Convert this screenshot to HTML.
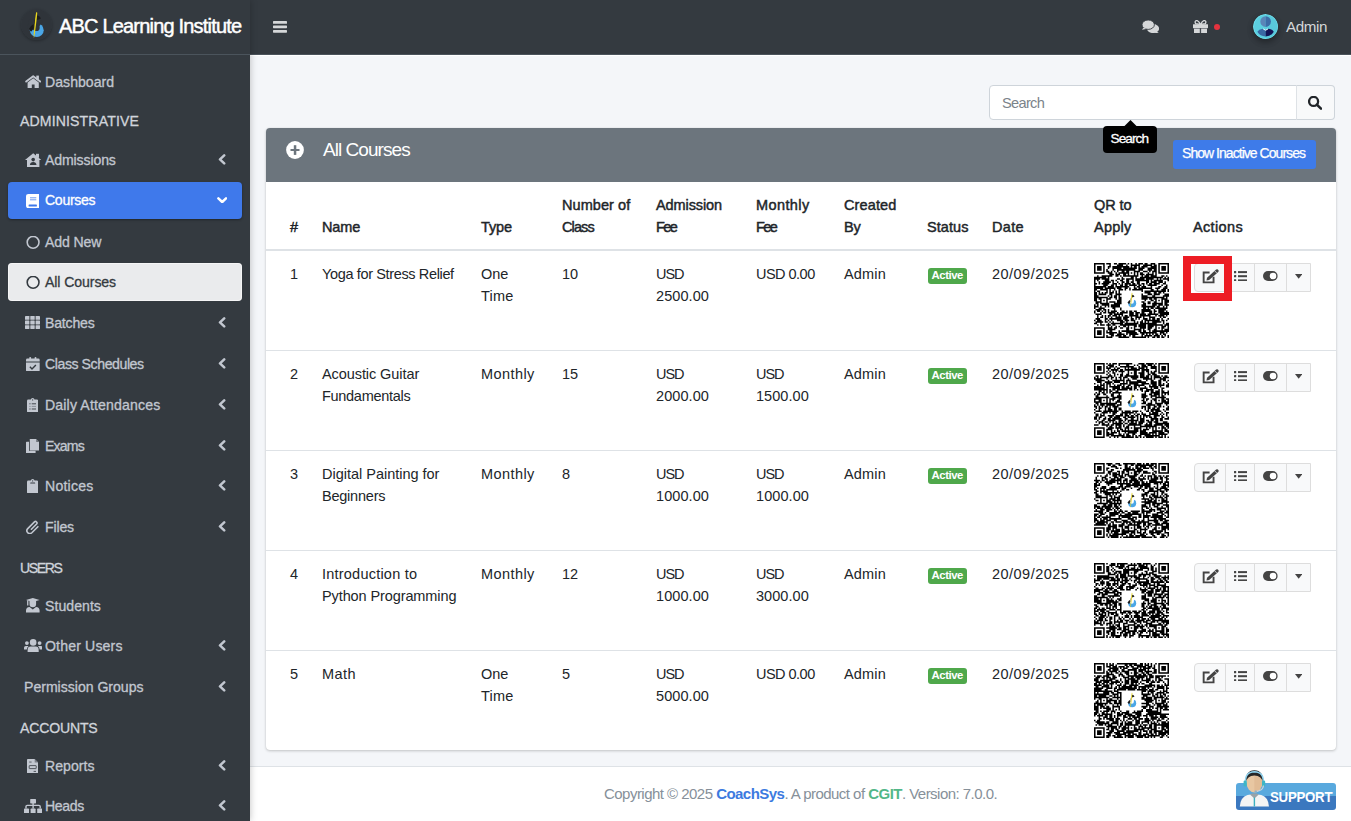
<!DOCTYPE html>
<html><head><meta charset="utf-8">
<style>
*{box-sizing:border-box;margin:0;padding:0}
html,body{width:1351px;height:821px;overflow:hidden}
body{font-family:"Liberation Sans",sans-serif;background:#f4f6f9;color:#212529;position:relative}
.a{position:absolute;white-space:nowrap}
.b{position:absolute}
</style></head>
<body>
<div class="b" style="left:250px;top:0;width:1101px;height:55px;background:#343a40"></div>
<div class="b" style="left:250px;top:55px;width:1101px;height:1px;background:#fff"></div>
<div class="b" style="left:250px;top:54px;width:1101px;height:1px;background:#4b545c"></div>
<svg class="b" style="left:273px;top:21px;" width="14" height="11.7" viewBox="0 0 14 11.7"><rect x="0" y="0" width="14" height="2.8" rx=".6" fill="#d5d7d9"/><rect x="0" y="4.4" width="14" height="2.8" rx=".6" fill="#d5d7d9"/><rect x="0" y="8.9" width="14" height="2.8" rx=".6" fill="#d5d7d9"/></svg>
<svg class="b" style="left:1142px;top:19.8px;" width="17.3" height="13.3" viewBox="0 0 17.3 13.3"><ellipse cx="11" cy="8.6" rx="6.1" ry="4.5" fill="#d5d7d9"/><path d="M14.5 11.5 L17.3 13.3 L12 12.8 Z" fill="#d5d7d9"/><ellipse cx="6.2" cy="4.7" rx="6.2" ry="4.7" fill="#d5d7d9" stroke="#343a40" stroke-width=".9"/><path d="M1.6 7.4 L0 9.8 L4.2 9 Z" fill="#d5d7d9"/></svg>
<svg class="b" style="left:1193px;top:19.8px;" width="15" height="13.3" viewBox="0 0 15 13.3"><path d="M7.5 4.3 Q5 0 3.2 0.6 Q1.4 1.3 2.6 3.6 Z" fill="none" stroke="#d5d7d9" stroke-width="1.3"/><path d="M7.5 4.3 Q10 0 11.8 0.6 Q13.6 1.3 12.4 3.6 Z" fill="none" stroke="#d5d7d9" stroke-width="1.3"/><rect x="0" y="4.2" width="15" height="4" rx=".4" fill="#d5d7d9"/><rect x="1" y="8.7" width="13" height="4.6" fill="#d5d7d9"/><rect x="6.8" y="8.2" width="1.3" height="5.2" fill="#343a40" opacity=".9"/></svg>
<div class="b" style="left:1213.7px;top:24.2px;width:6.2px;height:6.2px;border-radius:50%;background:#e4323e"></div>
<svg class="b" style="left:1252.8px;top:13.8px;border-radius:50%;box-shadow:0 3px 6px rgba(0,0,0,.16),0 3px 6px rgba(0,0,0,.23)" width="25.4" height="25.4" viewBox="0 0 25.4 25.4"><defs><clipPath id="av"><circle cx="12.7" cy="12.7" r="11.6"/></clipPath></defs><circle cx="12.7" cy="12.7" r="12.7" fill="#6fdfee"/><circle cx="12.7" cy="12.7" r="11.6" fill="#5ccfe0"/><g clip-path="url(#av)"><path d="M12.7 0 L25.4 0 L25.4 25.4 L12.7 25.4 Z" fill="#55c3d6" opacity=".5"/></g><path d="M12.6 2.3 A5.3 5.3 0 0 0 12.6 12.9 Z" fill="#5b85b8"/><path d="M12.6 2.3 A5.3 5.3 0 0 1 12.6 12.9 Z" fill="#3d6ca7"/><path d="M12.6 16.2 L9.6 14.8 Q5.8 15.2 4.4 17.8 Q7 22.4 12.6 22.4 Z" fill="#3a68a4"/><path d="M12.6 16.2 L15.6 14.8 Q19.4 15.2 20.8 17.8 Q18.2 22.4 12.6 22.4 Z" fill="#141456"/><path d="M10.2 14.9 L12.6 16.3 L15 14.9" stroke="#fff" stroke-width=".9" fill="none"/></svg>
<div class="a" style="left:1286px;top:15.93px;font-size:15.2px;letter-spacing:-0.4px;line-height:22px;color:#d5d7d9;">Admin</div>
<div class="b" style="left:989px;top:85px;width:308px;height:34.5px;background:#fff;border:1px solid #ced4da;border-radius:4px 0 0 4px"></div>
<div class="a" style="left:1002px;top:92.24px;font-size:14.6px;letter-spacing:-0.69px;line-height:22px;color:#7b838a;">Search</div>
<div class="b" style="left:1296px;top:85px;width:39px;height:34.5px;background:#f8f9fa;border:1px solid #ced4da;border-left:1px solid #dee2e6;border-radius:0 4px 4px 0"></div>
<svg class="b" style="left:1308px;top:96.2px;" width="14" height="13.5" viewBox="0 0 14 13.5"><circle cx="5.6" cy="5.4" r="4.5" stroke="#212529" stroke-width="2.3" fill="none"/><path d="M8.8 8.6 L13 12.6" stroke="#212529" stroke-width="2.6" stroke-linecap="round"/></svg>
<div class="b" style="left:266px;top:128px;width:1070px;height:622px;background:#fff;border-radius:4px;box-shadow:0 0 1px rgba(0,0,0,.125),0 1px 3px rgba(0,0,0,.2)"></div>
<div class="b" style="left:266px;top:128px;width:1070px;height:54px;background:#6c757d;border-radius:4px 4px 0 0"></div>
<div class="a" style="left:323px;top:139.42px;font-size:19px;letter-spacing:-0.95px;line-height:22px;color:#fff;">All Courses</div>
<svg class="b" style="left:285.5px;top:141px;" width="18" height="18" viewBox="0 0 18 18"><circle cx="9" cy="9" r="8.9" fill="#fff"/><rect x="4.5" y="8" width="9" height="2" fill="#6c757d"/><rect x="7.8" y="4.2" width="2.5" height="9.7" fill="#6c757d"/></svg>
<div class="b" style="left:1173px;top:140px;width:143px;height:29px;background:#3e7be9;border-radius:3px"></div>
<div class="a" style="left:1182px;top:141.75px;font-size:14px;letter-spacing:-0.96px;line-height:22px;color:#fff;-webkit-text-stroke:.25px #fff;">Show Inactive Courses</div>
<div class="b" style="left:1103px;top:126px;width:54px;height:26.5px;background:#000;border-radius:4px"></div>
<svg class="b" style="left:1123.5px;top:120.2px;" width="13" height="7" viewBox="0 0 13 7"><path d="M0 6.6 L6.5 0 L13 6.6Z" fill="#000"/></svg>
<div class="a" style="left:1110.5px;top:128.09px;font-size:13.6px;letter-spacing:-0.9px;line-height:22px;color:#fff;-webkit-text-stroke:.3px #fff;">Search</div>
<div class="a" style="left:290px;top:216.48px;font-size:14.5px;letter-spacing:-0.1px;line-height:22px;color:#212529;-webkit-text-stroke:.45px #212529;">#</div>
<div class="a" style="left:322px;top:216.48px;font-size:14.5px;letter-spacing:-0.1px;line-height:22px;color:#212529;-webkit-text-stroke:.45px #212529;">Name</div>
<div class="a" style="left:481px;top:216.48px;font-size:14.5px;letter-spacing:-0.1px;line-height:22px;color:#212529;-webkit-text-stroke:.45px #212529;">Type</div>
<div class="a" style="left:562px;top:194.48px;font-size:14.5px;letter-spacing:0.075px;line-height:22px;color:#212529;-webkit-text-stroke:.45px #212529;">Number of</div>
<div class="a" style="left:562px;top:216.48px;font-size:14.5px;letter-spacing:-0.9px;line-height:22px;color:#212529;-webkit-text-stroke:.45px #212529;">Class</div>
<div class="a" style="left:656px;top:194.48px;font-size:14.5px;letter-spacing:-0.1px;line-height:22px;color:#212529;-webkit-text-stroke:.45px #212529;">Admission</div>
<div class="a" style="left:656px;top:216.48px;font-size:14.5px;letter-spacing:-1.55px;line-height:22px;color:#212529;-webkit-text-stroke:.45px #212529;">Fee</div>
<div class="a" style="left:756px;top:194.48px;font-size:14.5px;letter-spacing:0.4px;line-height:22px;color:#212529;-webkit-text-stroke:.45px #212529;">Monthly</div>
<div class="a" style="left:756px;top:216.48px;font-size:14.5px;letter-spacing:-1.55px;line-height:22px;color:#212529;-webkit-text-stroke:.45px #212529;">Fee</div>
<div class="a" style="left:844px;top:194.48px;font-size:14.5px;letter-spacing:0.117px;line-height:22px;color:#212529;-webkit-text-stroke:.45px #212529;">Created</div>
<div class="a" style="left:844px;top:216.48px;font-size:14.5px;letter-spacing:-0.1px;line-height:22px;color:#212529;-webkit-text-stroke:.45px #212529;">By</div>
<div class="a" style="left:927px;top:216.48px;font-size:14.5px;letter-spacing:0.08px;line-height:22px;color:#212529;-webkit-text-stroke:.45px #212529;">Status</div>
<div class="a" style="left:992px;top:216.48px;font-size:14.5px;letter-spacing:0.333px;line-height:22px;color:#212529;-webkit-text-stroke:.45px #212529;">Date</div>
<div class="a" style="left:1094px;top:194.48px;font-size:14.5px;letter-spacing:-0.1px;line-height:22px;color:#212529;-webkit-text-stroke:.45px #212529;">QR to</div>
<div class="a" style="left:1094px;top:216.48px;font-size:14.5px;letter-spacing:0.275px;line-height:22px;color:#212529;-webkit-text-stroke:.45px #212529;">Apply</div>
<div class="a" style="left:1193px;top:216.48px;font-size:14.5px;letter-spacing:0.35px;line-height:22px;color:#212529;-webkit-text-stroke:.45px #212529;">Actions</div>
<div class="b" style="left:266px;top:249px;width:1070px;height:2px;background:#dee2e6"></div>
<div class="a" style="left:290px;top:263.18px;font-size:14.5px;letter-spacing:-0.35px;line-height:22px;color:#212529;">1</div>
<div class="a" style="left:322px;top:263.18px;font-size:14.5px;letter-spacing:-0.36px;line-height:22px;color:#212529;">Yoga for Stress Relief</div>
<div class="a" style="left:481px;top:263.18px;font-size:14.5px;letter-spacing:-0.05px;line-height:22px;color:#212529;">One</div>
<div class="a" style="left:481px;top:285.18px;font-size:14.5px;letter-spacing:0.25px;line-height:22px;color:#212529;">Time</div>
<div class="a" style="left:562px;top:263.18px;font-size:14.5px;letter-spacing:0.05px;line-height:22px;color:#212529;">10</div>
<div class="a" style="left:656px;top:263.18px;font-size:14.5px;letter-spacing:-1.05px;line-height:22px;color:#212529;">USD</div>
<div class="a" style="left:656px;top:285.18px;font-size:14.5px;letter-spacing:0.083px;line-height:22px;color:#212529;">2500.00</div>
<div class="a" style="left:756px;top:263.18px;font-size:14.5px;letter-spacing:-0.521px;line-height:22px;color:#212529;">USD 0.00</div>
<div class="a" style="left:844px;top:263.18px;font-size:14.5px;letter-spacing:0.15px;line-height:22px;color:#212529;">Admin</div>
<div class="b" style="left:928px;top:268px;width:39px;height:16px;background:#4fa84b;border-radius:3px"></div>
<div class="a" style="left:931.5px;top:264.08px;font-size:11.3px;letter-spacing:-0.4px;line-height:22px;color:#fff;font-weight:bold;">Active</div>
<div class="a" style="left:992px;top:263.18px;font-size:14.5px;letter-spacing:0.473px;line-height:22px;color:#212529;">20/09/2025</div>
<svg class="b" style="left:1094px;top:263px;" width="75" height="75" viewBox="0 0 75 75"><g transform="scale(1.530612244897959)"><path d="M0 0h7v1h-7zM8 0h3v1h-3zM13 0h2v1h-2zM16 0h5v1h-5zM22 0h1v1h-1zM24 0h1v1h-1zM27 0h1v1h-1zM29 0h3v1h-3zM33 0h2v1h-2zM37 0h3v1h-3zM42 0h7v1h-7zM0 1h1v1h-1zM6 1h1v1h-1zM10 1h1v1h-1zM15 1h4v1h-4zM21 1h1v1h-1zM24 1h6v1h-6zM32 1h6v1h-6zM39 1h2v1h-2zM42 1h1v1h-1zM48 1h1v1h-1zM0 2h1v1h-1zM2 2h3v1h-3zM6 2h1v1h-1zM9 2h2v1h-2zM12 2h11v1h-11zM24 2h1v1h-1zM26 2h2v1h-2zM29 2h1v1h-1zM31 2h4v1h-4zM37 2h4v1h-4zM42 2h1v1h-1zM44 2h3v1h-3zM48 2h1v1h-1zM0 3h1v1h-1zM2 3h3v1h-3zM6 3h1v1h-1zM9 3h1v1h-1zM12 3h6v1h-6zM19 3h9v1h-9zM29 3h4v1h-4zM35 3h6v1h-6zM42 3h1v1h-1zM44 3h3v1h-3zM48 3h1v1h-1zM0 4h1v1h-1zM2 4h3v1h-3zM6 4h1v1h-1zM8 4h1v1h-1zM12 4h1v1h-1zM15 4h12v1h-12zM29 4h3v1h-3zM35 4h3v1h-3zM39 4h2v1h-2zM42 4h1v1h-1zM44 4h3v1h-3zM48 4h1v1h-1zM0 5h1v1h-1zM6 5h1v1h-1zM8 5h2v1h-2zM11 5h1v1h-1zM13 5h1v1h-1zM15 5h1v1h-1zM18 5h2v1h-2zM21 5h2v1h-2zM26 5h4v1h-4zM32 5h3v1h-3zM36 5h1v1h-1zM38 5h3v1h-3zM42 5h1v1h-1zM48 5h1v1h-1zM0 6h7v1h-7zM9 6h3v1h-3zM14 6h1v1h-1zM16 6h7v1h-7zM24 6h1v1h-1zM26 6h1v1h-1zM28 6h1v1h-1zM30 6h2v1h-2zM35 6h1v1h-1zM38 6h1v1h-1zM40 6h1v1h-1zM42 6h7v1h-7zM10 7h3v1h-3zM14 7h3v1h-3zM19 7h2v1h-2zM22 7h1v1h-1zM26 7h1v1h-1zM28 7h1v1h-1zM30 7h3v1h-3zM34 7h5v1h-5zM40 7h1v1h-1zM2 8h1v1h-1zM5 8h7v1h-7zM14 8h2v1h-2zM17 8h1v1h-1zM19 8h10v1h-10zM31 8h1v1h-1zM33 8h3v1h-3zM37 8h4v1h-4zM44 8h2v1h-2zM47 8h1v1h-1zM0 9h8v1h-8zM9 9h1v1h-1zM18 9h1v1h-1zM24 9h2v1h-2zM27 9h1v1h-1zM30 9h15v1h-15zM46 9h1v1h-1zM48 9h1v1h-1zM0 10h4v1h-4zM5 10h5v1h-5zM15 10h2v1h-2zM18 10h2v1h-2zM21 10h5v1h-5zM27 10h6v1h-6zM34 10h5v1h-5zM41 10h1v1h-1zM43 10h1v1h-1zM45 10h4v1h-4zM0 11h1v1h-1zM2 11h1v1h-1zM7 11h3v1h-3zM11 11h2v1h-2zM14 11h1v1h-1zM17 11h2v1h-2zM21 11h2v1h-2zM25 11h1v1h-1zM27 11h9v1h-9zM37 11h1v1h-1zM39 11h6v1h-6zM48 11h1v1h-1zM0 12h1v1h-1zM3 12h1v1h-1zM6 12h5v1h-5zM12 12h1v1h-1zM15 12h1v1h-1zM18 12h2v1h-2zM21 12h2v1h-2zM24 12h2v1h-2zM28 12h2v1h-2zM34 12h2v1h-2zM37 12h4v1h-4zM42 12h3v1h-3zM46 12h1v1h-1zM0 13h2v1h-2zM3 13h1v1h-1zM5 13h5v1h-5zM12 13h3v1h-3zM16 13h1v1h-1zM18 13h1v1h-1zM20 13h4v1h-4zM25 13h2v1h-2zM28 13h2v1h-2zM31 13h2v1h-2zM34 13h1v1h-1zM36 13h2v1h-2zM39 13h4v1h-4zM45 13h2v1h-2zM0 14h1v1h-1zM6 14h3v1h-3zM11 14h2v1h-2zM14 14h1v1h-1zM17 14h2v1h-2zM20 14h2v1h-2zM23 14h5v1h-5zM29 14h2v1h-2zM32 14h1v1h-1zM35 14h6v1h-6zM44 14h1v1h-1zM47 14h1v1h-1zM0 15h8v1h-8zM9 15h4v1h-4zM14 15h9v1h-9zM26 15h1v1h-1zM28 15h2v1h-2zM31 15h3v1h-3zM37 15h1v1h-1zM42 15h2v1h-2zM46 15h2v1h-2zM0 16h6v1h-6zM7 16h7v1h-7zM15 16h3v1h-3zM20 16h2v1h-2zM23 16h1v1h-1zM26 16h2v1h-2zM29 16h9v1h-9zM40 16h3v1h-3zM45 16h3v1h-3zM0 17h2v1h-2zM4 17h5v1h-5zM10 17h1v1h-1zM13 17h1v1h-1zM16 17h3v1h-3zM20 17h1v1h-1zM23 17h1v1h-1zM25 17h7v1h-7zM37 17h2v1h-2zM41 17h1v1h-1zM44 17h3v1h-3zM48 17h1v1h-1zM0 18h1v1h-1zM2 18h2v1h-2zM8 18h1v1h-1zM10 18h1v1h-1zM12 18h1v1h-1zM14 18h1v1h-1zM16 18h1v1h-1zM31 18h1v1h-1zM33 18h14v1h-14zM48 18h1v1h-1zM0 19h2v1h-2zM3 19h1v1h-1zM5 19h1v1h-1zM7 19h2v1h-2zM10 19h3v1h-3zM14 19h1v1h-1zM16 19h1v1h-1zM33 19h4v1h-4zM39 19h2v1h-2zM42 19h2v1h-2zM45 19h1v1h-1zM0 20h2v1h-2zM3 20h5v1h-5zM10 20h2v1h-2zM14 20h4v1h-4zM31 20h1v1h-1zM35 20h3v1h-3zM39 20h4v1h-4zM46 20h3v1h-3zM0 21h3v1h-3zM9 21h1v1h-1zM11 21h1v1h-1zM13 21h2v1h-2zM16 21h1v1h-1zM31 21h4v1h-4zM38 21h2v1h-2zM45 21h4v1h-4zM0 22h9v1h-9zM10 22h2v1h-2zM13 22h2v1h-2zM16 22h2v1h-2zM31 22h15v1h-15zM47 22h1v1h-1zM0 23h2v1h-2zM3 23h2v1h-2zM8 23h3v1h-3zM14 23h1v1h-1zM16 23h2v1h-2zM31 23h4v1h-4zM36 23h2v1h-2zM39 23h2v1h-2zM44 23h4v1h-4zM0 24h2v1h-2zM4 24h1v1h-1zM6 24h1v1h-1zM8 24h1v1h-1zM15 24h3v1h-3zM33 24h1v1h-1zM37 24h2v1h-2zM40 24h1v1h-1zM42 24h1v1h-1zM44 24h1v1h-1zM46 24h3v1h-3zM1 25h4v1h-4zM8 25h1v1h-1zM10 25h4v1h-4zM15 25h3v1h-3zM31 25h2v1h-2zM35 25h2v1h-2zM39 25h2v1h-2zM44 25h1v1h-1zM46 25h3v1h-3zM1 26h2v1h-2zM4 26h6v1h-6zM13 26h5v1h-5zM32 26h2v1h-2zM35 26h2v1h-2zM38 26h7v1h-7zM46 26h2v1h-2zM0 27h1v1h-1zM2 27h1v1h-1zM5 27h5v1h-5zM11 27h6v1h-6zM31 27h3v1h-3zM38 27h3v1h-3zM42 27h3v1h-3zM46 27h3v1h-3zM0 28h3v1h-3zM4 28h1v1h-1zM7 28h1v1h-1zM9 28h1v1h-1zM11 28h6v1h-6zM31 28h9v1h-9zM41 28h2v1h-2zM45 28h1v1h-1zM47 28h1v1h-1zM0 29h1v1h-1zM3 29h4v1h-4zM12 29h2v1h-2zM17 29h1v1h-1zM32 29h2v1h-2zM35 29h1v1h-1zM37 29h2v1h-2zM40 29h8v1h-8zM1 30h4v1h-4zM6 30h2v1h-2zM9 30h1v1h-1zM13 30h1v1h-1zM17 30h1v1h-1zM31 30h6v1h-6zM39 30h1v1h-1zM42 30h5v1h-5zM0 31h1v1h-1zM2 31h2v1h-2zM5 31h1v1h-1zM7 31h1v1h-1zM9 31h1v1h-1zM11 31h4v1h-4zM18 31h2v1h-2zM21 31h1v1h-1zM23 31h2v1h-2zM26 31h2v1h-2zM31 31h7v1h-7zM39 31h2v1h-2zM42 31h4v1h-4zM47 31h1v1h-1zM0 32h1v1h-1zM4 32h1v1h-1zM6 32h2v1h-2zM9 32h5v1h-5zM15 32h1v1h-1zM17 32h5v1h-5zM23 32h3v1h-3zM27 32h3v1h-3zM31 32h2v1h-2zM36 32h2v1h-2zM39 32h1v1h-1zM42 32h7v1h-7zM1 33h4v1h-4zM10 33h2v1h-2zM13 33h6v1h-6zM23 33h3v1h-3zM27 33h2v1h-2zM30 33h4v1h-4zM35 33h7v1h-7zM43 33h6v1h-6zM2 34h1v1h-1zM5 34h1v1h-1zM7 34h1v1h-1zM9 34h2v1h-2zM12 34h3v1h-3zM16 34h1v1h-1zM18 34h1v1h-1zM20 34h2v1h-2zM23 34h6v1h-6zM30 34h7v1h-7zM40 34h1v1h-1zM42 34h4v1h-4zM47 34h1v1h-1zM2 35h1v1h-1zM4 35h2v1h-2zM7 35h1v1h-1zM9 35h1v1h-1zM11 35h1v1h-1zM14 35h4v1h-4zM19 35h4v1h-4zM24 35h1v1h-1zM27 35h4v1h-4zM32 35h1v1h-1zM36 35h4v1h-4zM43 35h1v1h-1zM45 35h2v1h-2zM1 36h3v1h-3zM7 36h2v1h-2zM10 36h8v1h-8zM19 36h3v1h-3zM24 36h2v1h-2zM27 36h1v1h-1zM29 36h1v1h-1zM32 36h3v1h-3zM36 36h1v1h-1zM38 36h2v1h-2zM41 36h2v1h-2zM44 36h1v1h-1zM48 36h1v1h-1zM0 37h1v1h-1zM2 37h3v1h-3zM7 37h1v1h-1zM9 37h1v1h-1zM11 37h1v1h-1zM15 37h4v1h-4zM20 37h3v1h-3zM24 37h3v1h-3zM31 37h1v1h-1zM33 37h10v1h-10zM44 37h2v1h-2zM47 37h1v1h-1zM1 38h5v1h-5zM7 38h2v1h-2zM10 38h1v1h-1zM12 38h1v1h-1zM17 38h3v1h-3zM21 38h1v1h-1zM26 38h1v1h-1zM28 38h1v1h-1zM30 38h2v1h-2zM33 38h1v1h-1zM35 38h1v1h-1zM38 38h6v1h-6zM45 38h1v1h-1zM0 39h2v1h-2zM4 39h1v1h-1zM9 39h1v1h-1zM11 39h8v1h-8zM20 39h9v1h-9zM30 39h11v1h-11zM45 39h1v1h-1zM47 39h2v1h-2zM2 40h1v1h-1zM4 40h3v1h-3zM8 40h3v1h-3zM12 40h2v1h-2zM17 40h11v1h-11zM29 40h5v1h-5zM35 40h10v1h-10zM46 40h3v1h-3zM9 41h1v1h-1zM11 41h1v1h-1zM14 41h1v1h-1zM16 41h1v1h-1zM19 41h2v1h-2zM22 41h1v1h-1zM26 41h2v1h-2zM29 41h5v1h-5zM35 41h4v1h-4zM40 41h1v1h-1zM44 41h3v1h-3zM48 41h1v1h-1zM0 42h7v1h-7zM9 42h3v1h-3zM13 42h2v1h-2zM17 42h2v1h-2zM21 42h2v1h-2zM24 42h1v1h-1zM26 42h1v1h-1zM30 42h4v1h-4zM35 42h3v1h-3zM40 42h1v1h-1zM42 42h1v1h-1zM44 42h2v1h-2zM48 42h1v1h-1zM0 43h1v1h-1zM6 43h1v1h-1zM9 43h5v1h-5zM21 43h2v1h-2zM26 43h5v1h-5zM32 43h1v1h-1zM35 43h2v1h-2zM39 43h2v1h-2zM44 43h1v1h-1zM46 43h3v1h-3zM0 44h1v1h-1zM2 44h3v1h-3zM6 44h1v1h-1zM8 44h1v1h-1zM10 44h2v1h-2zM16 44h1v1h-1zM18 44h9v1h-9zM29 44h2v1h-2zM32 44h2v1h-2zM36 44h1v1h-1zM38 44h11v1h-11zM0 45h1v1h-1zM2 45h3v1h-3zM6 45h1v1h-1zM8 45h7v1h-7zM16 45h2v1h-2zM21 45h7v1h-7zM30 45h11v1h-11zM43 45h3v1h-3zM47 45h1v1h-1zM0 46h1v1h-1zM2 46h3v1h-3zM6 46h1v1h-1zM10 46h3v1h-3zM15 46h5v1h-5zM21 46h1v1h-1zM23 46h6v1h-6zM31 46h2v1h-2zM34 46h1v1h-1zM36 46h1v1h-1zM38 46h1v1h-1zM40 46h2v1h-2zM43 46h1v1h-1zM45 46h2v1h-2zM0 47h1v1h-1zM6 47h1v1h-1zM8 47h1v1h-1zM11 47h2v1h-2zM14 47h4v1h-4zM19 47h2v1h-2zM23 47h1v1h-1zM25 47h2v1h-2zM31 47h1v1h-1zM33 47h5v1h-5zM39 47h4v1h-4zM44 47h1v1h-1zM46 47h1v1h-1zM48 47h1v1h-1zM0 48h7v1h-7zM8 48h4v1h-4zM16 48h7v1h-7zM25 48h9v1h-9zM35 48h1v1h-1zM38 48h2v1h-2zM41 48h2v1h-2zM44 48h2v1h-2zM48 48h1v1h-1z" fill="#000"/></g></svg>
<div class="b" style="left:1122px;top:290.5px;width:18.5px;height:18.5px;background:#fff"></div>
<svg class="b" style="left:1122.5px;top:291px;" width="18" height="18" viewBox="0 0 18 18"><g transform="scale(0.5806451612903226)"><circle cx="15.5" cy="15.5" r="15.3" fill="#fff"/><circle cx="15.8" cy="21.2" r="6.9" fill="#4aa6e6"/><circle cx="15.3" cy="18.7" r="3.4" fill="#fff"/><path d="M15.8 21.2 L6 19.4 L8 11 L16 8.8 L21.5 12.5 Z" fill="#fff"/><path d="M12.6 15 Q9.5 16.5 8.4 19.5 Q8.6 22 10.5 22.6 L12.8 19 Z" fill="#1b1c1e"/><path d="M15.2 6.6 Q18.8 6.4 19.8 9.6 Q18.2 11 15.6 11 Z" fill="#1b1c1e"/><path d="M14.4 8 L14.2 14 L12.9 15.5 Z" fill="#1b1c1e"/><path d="M15.1 3.2 Q16.2 3 16.3 3.8 L15.7 10 L13.8 25 L12.9 29.2 L12.7 25 L14.2 9.5 Z" fill="#e6d41c"/></g></svg>
<div class="b" style="left:1194px;top:263px;width:117px;height:29px;background:#f8f9fa;border:1px solid #ddd;border-radius:4px 0 0 4px"></div>
<div class="b" style="left:1225px;top:263px;width:1px;height:29px;background:#ddd"></div>
<div class="b" style="left:1254px;top:263px;width:1px;height:29px;background:#ddd"></div>
<div class="b" style="left:1286px;top:263px;width:1px;height:29px;background:#ddd"></div>
<svg class="b" style="left:1201.5px;top:269.5px;overflow:visible" width="15" height="13" viewBox="0 0 15 13"><path d="M7.6 2.45 L1.65 2.45 L1.65 12.35 L11.55 12.35 L11.55 6.8" stroke="#444" stroke-width="1.9" fill="none"/><path d="M4.5 10.6 L5.02 7.74 L14.13 -0.39 Q15.4 -1.2 16.4 -0.1 Q17.2 1.0 16.27 1.99 L7.16 10.12 Z" fill="#444"/><path d="M12.9 1.0 L14.8 3.1" stroke="#f8f9fa" stroke-width=".7"/></svg>
<svg class="b" style="left:1234px;top:270.8px;" width="13" height="10.5" viewBox="0 0 13 10.5"><rect x="0" y="0" width="2.2" height="2.2" rx=".3" fill="#444"/><rect x="4" y="0.1" width="9" height="2" fill="#444"/><rect x="0" y="4.1" width="2.2" height="2.2" rx=".3" fill="#444"/><rect x="4" y="4.199999999999999" width="9" height="2" fill="#444"/><rect x="0" y="8.3" width="2.2" height="2.2" rx=".3" fill="#444"/><rect x="4" y="8.4" width="9" height="2" fill="#444"/></svg>
<svg class="b" style="left:1263.3px;top:270.9px;" width="14.6" height="10" viewBox="0 0 14.6 10"><rect x="0" y="0" width="14.6" height="10" rx="5" fill="#444"/><circle cx="10" cy="5" r="3.3" fill="#fff"/></svg>
<svg class="b" style="left:1294.8px;top:274.1px;" width="7.4" height="4.8" viewBox="0 0 7.4 4.8"><path d="M0 0 L7.4 0 L3.7 4.8 Z" fill="#444"/></svg>
<div class="b" style="left:266px;top:350px;width:1070px;height:1px;background:#dee2e6"></div>
<div class="a" style="left:290px;top:363.18px;font-size:14.5px;letter-spacing:-0.35px;line-height:22px;color:#212529;">2</div>
<div class="a" style="left:322px;top:363.18px;font-size:14.5px;letter-spacing:-0.079px;line-height:22px;color:#212529;">Acoustic Guitar</div>
<div class="a" style="left:322px;top:385.18px;font-size:14.5px;letter-spacing:-0.296px;line-height:22px;color:#212529;">Fundamentals</div>
<div class="a" style="left:481px;top:363.18px;font-size:14.5px;letter-spacing:0.417px;line-height:22px;color:#212529;">Monthly</div>
<div class="a" style="left:562px;top:363.18px;font-size:14.5px;letter-spacing:0.05px;line-height:22px;color:#212529;">15</div>
<div class="a" style="left:656px;top:363.18px;font-size:14.5px;letter-spacing:-1.05px;line-height:22px;color:#212529;">USD</div>
<div class="a" style="left:656px;top:385.18px;font-size:14.5px;letter-spacing:0.083px;line-height:22px;color:#212529;">2000.00</div>
<div class="a" style="left:756px;top:363.18px;font-size:14.5px;letter-spacing:-1.05px;line-height:22px;color:#212529;">USD</div>
<div class="a" style="left:756px;top:385.18px;font-size:14.5px;letter-spacing:0.05px;line-height:22px;color:#212529;">1500.00</div>
<div class="a" style="left:844px;top:363.18px;font-size:14.5px;letter-spacing:0.15px;line-height:22px;color:#212529;">Admin</div>
<div class="b" style="left:928px;top:368px;width:39px;height:16px;background:#4fa84b;border-radius:3px"></div>
<div class="a" style="left:931.5px;top:364.08px;font-size:11.3px;letter-spacing:-0.4px;line-height:22px;color:#fff;font-weight:bold;">Active</div>
<div class="a" style="left:992px;top:363.18px;font-size:14.5px;letter-spacing:0.473px;line-height:22px;color:#212529;">20/09/2025</div>
<svg class="b" style="left:1094px;top:363px;" width="75" height="75" viewBox="0 0 75 75"><g transform="scale(1.530612244897959)"><path d="M0 0h7v1h-7zM8 0h1v1h-1zM10 0h1v1h-1zM12 0h3v1h-3zM16 0h9v1h-9zM29 0h4v1h-4zM34 0h5v1h-5zM40 0h1v1h-1zM42 0h7v1h-7zM0 1h1v1h-1zM6 1h1v1h-1zM9 1h4v1h-4zM16 1h1v1h-1zM21 1h2v1h-2zM26 1h1v1h-1zM28 1h1v1h-1zM31 1h3v1h-3zM35 1h3v1h-3zM39 1h1v1h-1zM42 1h1v1h-1zM48 1h1v1h-1zM0 2h1v1h-1zM2 2h3v1h-3zM6 2h1v1h-1zM8 2h1v1h-1zM10 2h3v1h-3zM14 2h1v1h-1zM17 2h9v1h-9zM29 2h1v1h-1zM31 2h4v1h-4zM37 2h4v1h-4zM42 2h1v1h-1zM44 2h3v1h-3zM48 2h1v1h-1zM0 3h1v1h-1zM2 3h3v1h-3zM6 3h1v1h-1zM8 3h3v1h-3zM13 3h1v1h-1zM15 3h2v1h-2zM20 3h1v1h-1zM22 3h1v1h-1zM24 3h4v1h-4zM29 3h4v1h-4zM34 3h1v1h-1zM37 3h4v1h-4zM42 3h1v1h-1zM44 3h3v1h-3zM48 3h1v1h-1zM0 4h1v1h-1zM2 4h3v1h-3zM6 4h1v1h-1zM9 4h1v1h-1zM11 4h5v1h-5zM17 4h2v1h-2zM20 4h10v1h-10zM31 4h5v1h-5zM40 4h1v1h-1zM42 4h1v1h-1zM44 4h3v1h-3zM48 4h1v1h-1zM0 5h1v1h-1zM6 5h1v1h-1zM8 5h1v1h-1zM10 5h1v1h-1zM12 5h1v1h-1zM14 5h1v1h-1zM16 5h4v1h-4zM22 5h1v1h-1zM26 5h2v1h-2zM31 5h2v1h-2zM34 5h2v1h-2zM37 5h1v1h-1zM39 5h2v1h-2zM42 5h1v1h-1zM48 5h1v1h-1zM0 6h7v1h-7zM9 6h1v1h-1zM12 6h2v1h-2zM18 6h1v1h-1zM22 6h1v1h-1zM24 6h1v1h-1zM26 6h2v1h-2zM29 6h4v1h-4zM35 6h1v1h-1zM37 6h3v1h-3zM42 6h7v1h-7zM8 7h1v1h-1zM10 7h1v1h-1zM13 7h1v1h-1zM15 7h1v1h-1zM17 7h2v1h-2zM21 7h2v1h-2zM26 7h2v1h-2zM30 7h3v1h-3zM35 7h2v1h-2zM38 7h3v1h-3zM1 8h2v1h-2zM4 8h1v1h-1zM9 8h3v1h-3zM13 8h1v1h-1zM17 8h2v1h-2zM20 8h9v1h-9zM30 8h3v1h-3zM34 8h2v1h-2zM37 8h1v1h-1zM39 8h4v1h-4zM44 8h1v1h-1zM46 8h2v1h-2zM0 9h1v1h-1zM2 9h1v1h-1zM4 9h6v1h-6zM11 9h2v1h-2zM14 9h1v1h-1zM16 9h2v1h-2zM19 9h3v1h-3zM24 9h5v1h-5zM30 9h6v1h-6zM37 9h1v1h-1zM39 9h5v1h-5zM45 9h4v1h-4zM0 10h5v1h-5zM8 10h1v1h-1zM11 10h1v1h-1zM14 10h1v1h-1zM17 10h1v1h-1zM19 10h1v1h-1zM22 10h1v1h-1zM25 10h3v1h-3zM32 10h6v1h-6zM39 10h1v1h-1zM43 10h4v1h-4zM1 11h6v1h-6zM9 11h1v1h-1zM12 11h8v1h-8zM21 11h3v1h-3zM28 11h3v1h-3zM34 11h1v1h-1zM37 11h2v1h-2zM42 11h2v1h-2zM45 11h2v1h-2zM48 11h1v1h-1zM2 12h3v1h-3zM7 12h5v1h-5zM13 12h4v1h-4zM19 12h1v1h-1zM21 12h1v1h-1zM23 12h11v1h-11zM37 12h4v1h-4zM42 12h2v1h-2zM47 12h1v1h-1zM0 13h1v1h-1zM4 13h1v1h-1zM6 13h1v1h-1zM8 13h3v1h-3zM12 13h1v1h-1zM17 13h5v1h-5zM23 13h6v1h-6zM31 13h5v1h-5zM37 13h4v1h-4zM42 13h2v1h-2zM45 13h1v1h-1zM48 13h1v1h-1zM2 14h1v1h-1zM4 14h3v1h-3zM8 14h1v1h-1zM10 14h1v1h-1zM13 14h1v1h-1zM15 14h3v1h-3zM19 14h1v1h-1zM22 14h2v1h-2zM26 14h7v1h-7zM36 14h1v1h-1zM38 14h3v1h-3zM42 14h4v1h-4zM47 14h2v1h-2zM0 15h5v1h-5zM6 15h1v1h-1zM8 15h1v1h-1zM10 15h7v1h-7zM18 15h2v1h-2zM21 15h2v1h-2zM24 15h1v1h-1zM26 15h2v1h-2zM29 15h1v1h-1zM33 15h1v1h-1zM36 15h6v1h-6zM43 15h1v1h-1zM47 15h2v1h-2zM0 16h7v1h-7zM8 16h1v1h-1zM12 16h5v1h-5zM18 16h7v1h-7zM26 16h2v1h-2zM30 16h5v1h-5zM37 16h1v1h-1zM39 16h3v1h-3zM44 16h2v1h-2zM0 17h9v1h-9zM10 17h1v1h-1zM12 17h2v1h-2zM15 17h7v1h-7zM23 17h2v1h-2zM26 17h1v1h-1zM28 17h1v1h-1zM30 17h2v1h-2zM34 17h5v1h-5zM42 17h1v1h-1zM44 17h1v1h-1zM3 18h2v1h-2zM6 18h1v1h-1zM8 18h1v1h-1zM10 18h2v1h-2zM14 18h2v1h-2zM31 18h1v1h-1zM33 18h3v1h-3zM37 18h2v1h-2zM40 18h3v1h-3zM44 18h2v1h-2zM48 18h1v1h-1zM1 19h1v1h-1zM3 19h1v1h-1zM5 19h2v1h-2zM8 19h1v1h-1zM10 19h1v1h-1zM12 19h6v1h-6zM33 19h1v1h-1zM37 19h6v1h-6zM44 19h5v1h-5zM0 20h1v1h-1zM2 20h2v1h-2zM6 20h2v1h-2zM11 20h2v1h-2zM16 20h1v1h-1zM31 20h3v1h-3zM36 20h2v1h-2zM39 20h4v1h-4zM44 20h1v1h-1zM46 20h1v1h-1zM48 20h1v1h-1zM1 21h2v1h-2zM8 21h1v1h-1zM11 21h2v1h-2zM15 21h3v1h-3zM31 21h4v1h-4zM37 21h4v1h-4zM42 21h1v1h-1zM44 21h2v1h-2zM1 22h9v1h-9zM12 22h6v1h-6zM31 22h3v1h-3zM37 22h1v1h-1zM40 22h7v1h-7zM0 23h5v1h-5zM8 23h1v1h-1zM10 23h4v1h-4zM16 23h2v1h-2zM32 23h1v1h-1zM34 23h2v1h-2zM38 23h3v1h-3zM44 23h2v1h-2zM47 23h2v1h-2zM0 24h1v1h-1zM3 24h2v1h-2zM6 24h1v1h-1zM8 24h1v1h-1zM10 24h1v1h-1zM12 24h1v1h-1zM15 24h2v1h-2zM31 24h2v1h-2zM34 24h1v1h-1zM37 24h1v1h-1zM39 24h2v1h-2zM42 24h1v1h-1zM44 24h3v1h-3zM48 24h1v1h-1zM0 25h5v1h-5zM8 25h1v1h-1zM10 25h1v1h-1zM14 25h4v1h-4zM32 25h2v1h-2zM37 25h1v1h-1zM40 25h1v1h-1zM44 25h5v1h-5zM1 26h2v1h-2zM4 26h11v1h-11zM17 26h1v1h-1zM31 26h3v1h-3zM35 26h3v1h-3zM40 26h5v1h-5zM46 26h3v1h-3zM0 27h1v1h-1zM2 27h1v1h-1zM4 27h3v1h-3zM8 27h6v1h-6zM15 27h3v1h-3zM34 27h6v1h-6zM41 27h3v1h-3zM47 27h1v1h-1zM0 28h2v1h-2zM3 28h1v1h-1zM5 28h1v1h-1zM7 28h2v1h-2zM10 28h1v1h-1zM12 28h4v1h-4zM31 28h3v1h-3zM35 28h2v1h-2zM39 28h2v1h-2zM42 28h2v1h-2zM45 28h1v1h-1zM48 28h1v1h-1zM1 29h1v1h-1zM3 29h2v1h-2zM7 29h1v1h-1zM9 29h2v1h-2zM13 29h2v1h-2zM16 29h2v1h-2zM31 29h1v1h-1zM33 29h1v1h-1zM35 29h2v1h-2zM38 29h2v1h-2zM41 29h2v1h-2zM47 29h2v1h-2zM0 30h1v1h-1zM3 30h1v1h-1zM7 30h1v1h-1zM9 30h3v1h-3zM13 30h2v1h-2zM16 30h2v1h-2zM33 30h1v1h-1zM35 30h1v1h-1zM37 30h6v1h-6zM45 30h1v1h-1zM47 30h2v1h-2zM1 31h4v1h-4zM6 31h10v1h-10zM18 31h1v1h-1zM20 31h4v1h-4zM25 31h4v1h-4zM30 31h1v1h-1zM34 31h2v1h-2zM37 31h2v1h-2zM40 31h4v1h-4zM46 31h1v1h-1zM0 32h1v1h-1zM5 32h4v1h-4zM10 32h1v1h-1zM12 32h3v1h-3zM18 32h8v1h-8zM27 32h1v1h-1zM31 32h1v1h-1zM36 32h1v1h-1zM38 32h4v1h-4zM44 32h1v1h-1zM47 32h2v1h-2zM1 33h2v1h-2zM4 33h1v1h-1zM6 33h1v1h-1zM12 33h2v1h-2zM17 33h2v1h-2zM20 33h2v1h-2zM23 33h1v1h-1zM26 33h1v1h-1zM28 33h2v1h-2zM31 33h3v1h-3zM36 33h6v1h-6zM43 33h1v1h-1zM45 33h1v1h-1zM47 33h1v1h-1zM1 34h2v1h-2zM4 34h3v1h-3zM9 34h4v1h-4zM14 34h5v1h-5zM20 34h3v1h-3zM24 34h2v1h-2zM27 34h2v1h-2zM30 34h1v1h-1zM32 34h5v1h-5zM39 34h4v1h-4zM44 34h1v1h-1zM47 34h1v1h-1zM0 35h2v1h-2zM3 35h2v1h-2zM7 35h1v1h-1zM10 35h2v1h-2zM13 35h4v1h-4zM19 35h2v1h-2zM22 35h5v1h-5zM28 35h1v1h-1zM30 35h1v1h-1zM32 35h1v1h-1zM34 35h1v1h-1zM36 35h2v1h-2zM39 35h2v1h-2zM44 35h2v1h-2zM48 35h1v1h-1zM0 36h2v1h-2zM3 36h1v1h-1zM6 36h2v1h-2zM9 36h2v1h-2zM12 36h6v1h-6zM20 36h2v1h-2zM24 36h2v1h-2zM28 36h1v1h-1zM30 36h3v1h-3zM37 36h5v1h-5zM43 36h2v1h-2zM46 36h3v1h-3zM2 37h1v1h-1zM5 37h2v1h-2zM9 37h5v1h-5zM16 37h3v1h-3zM20 37h1v1h-1zM22 37h7v1h-7zM30 37h3v1h-3zM34 37h2v1h-2zM37 37h2v1h-2zM40 37h2v1h-2zM43 37h2v1h-2zM1 38h1v1h-1zM3 38h3v1h-3zM7 38h2v1h-2zM10 38h1v1h-1zM12 38h1v1h-1zM14 38h1v1h-1zM16 38h2v1h-2zM19 38h1v1h-1zM22 38h1v1h-1zM24 38h2v1h-2zM27 38h1v1h-1zM29 38h4v1h-4zM35 38h3v1h-3zM39 38h3v1h-3zM45 38h3v1h-3zM3 39h1v1h-1zM5 39h2v1h-2zM9 39h1v1h-1zM12 39h7v1h-7zM20 39h2v1h-2zM23 39h5v1h-5zM29 39h3v1h-3zM34 39h1v1h-1zM36 39h2v1h-2zM40 39h9v1h-9zM0 40h3v1h-3zM5 40h5v1h-5zM11 40h2v1h-2zM14 40h4v1h-4zM19 40h1v1h-1zM22 40h9v1h-9zM33 40h5v1h-5zM39 40h6v1h-6zM46 40h3v1h-3zM8 41h1v1h-1zM10 41h2v1h-2zM14 41h1v1h-1zM16 41h2v1h-2zM19 41h1v1h-1zM21 41h2v1h-2zM26 41h1v1h-1zM30 41h11v1h-11zM44 41h2v1h-2zM47 41h2v1h-2zM0 42h7v1h-7zM9 42h4v1h-4zM14 42h4v1h-4zM20 42h3v1h-3zM24 42h1v1h-1zM26 42h5v1h-5zM34 42h1v1h-1zM36 42h1v1h-1zM38 42h1v1h-1zM40 42h1v1h-1zM42 42h1v1h-1zM44 42h3v1h-3zM48 42h1v1h-1zM0 43h1v1h-1zM6 43h1v1h-1zM8 43h4v1h-4zM15 43h1v1h-1zM17 43h2v1h-2zM20 43h1v1h-1zM22 43h1v1h-1zM26 43h3v1h-3zM30 43h1v1h-1zM32 43h4v1h-4zM38 43h1v1h-1zM40 43h1v1h-1zM44 43h1v1h-1zM46 43h2v1h-2zM0 44h1v1h-1zM2 44h3v1h-3zM6 44h1v1h-1zM8 44h1v1h-1zM11 44h1v1h-1zM13 44h1v1h-1zM15 44h2v1h-2zM18 44h11v1h-11zM30 44h4v1h-4zM38 44h7v1h-7zM46 44h3v1h-3zM0 45h1v1h-1zM2 45h3v1h-3zM6 45h1v1h-1zM8 45h2v1h-2zM11 45h4v1h-4zM16 45h1v1h-1zM20 45h1v1h-1zM22 45h6v1h-6zM30 45h5v1h-5zM36 45h5v1h-5zM42 45h4v1h-4zM48 45h1v1h-1zM0 46h1v1h-1zM2 46h3v1h-3zM6 46h1v1h-1zM8 46h5v1h-5zM16 46h2v1h-2zM19 46h1v1h-1zM21 46h2v1h-2zM25 46h2v1h-2zM30 46h7v1h-7zM38 46h1v1h-1zM40 46h1v1h-1zM42 46h6v1h-6zM0 47h1v1h-1zM6 47h1v1h-1zM8 47h2v1h-2zM11 47h9v1h-9zM21 47h3v1h-3zM25 47h1v1h-1zM27 47h1v1h-1zM29 47h2v1h-2zM33 47h10v1h-10zM44 47h1v1h-1zM46 47h1v1h-1zM0 48h7v1h-7zM10 48h1v1h-1zM13 48h1v1h-1zM15 48h1v1h-1zM18 48h8v1h-8zM27 48h2v1h-2zM30 48h1v1h-1zM32 48h1v1h-1zM34 48h5v1h-5zM40 48h1v1h-1zM42 48h3v1h-3zM46 48h1v1h-1zM48 48h1v1h-1z" fill="#000"/></g></svg>
<div class="b" style="left:1122px;top:390.5px;width:18.5px;height:18.5px;background:#fff"></div>
<svg class="b" style="left:1122.5px;top:391px;" width="18" height="18" viewBox="0 0 18 18"><g transform="scale(0.5806451612903226)"><circle cx="15.5" cy="15.5" r="15.3" fill="#fff"/><circle cx="15.8" cy="21.2" r="6.9" fill="#4aa6e6"/><circle cx="15.3" cy="18.7" r="3.4" fill="#fff"/><path d="M15.8 21.2 L6 19.4 L8 11 L16 8.8 L21.5 12.5 Z" fill="#fff"/><path d="M12.6 15 Q9.5 16.5 8.4 19.5 Q8.6 22 10.5 22.6 L12.8 19 Z" fill="#1b1c1e"/><path d="M15.2 6.6 Q18.8 6.4 19.8 9.6 Q18.2 11 15.6 11 Z" fill="#1b1c1e"/><path d="M14.4 8 L14.2 14 L12.9 15.5 Z" fill="#1b1c1e"/><path d="M15.1 3.2 Q16.2 3 16.3 3.8 L15.7 10 L13.8 25 L12.9 29.2 L12.7 25 L14.2 9.5 Z" fill="#e6d41c"/></g></svg>
<div class="b" style="left:1194px;top:363px;width:117px;height:29px;background:#f8f9fa;border:1px solid #ddd;border-radius:4px 0 0 4px"></div>
<div class="b" style="left:1225px;top:363px;width:1px;height:29px;background:#ddd"></div>
<div class="b" style="left:1254px;top:363px;width:1px;height:29px;background:#ddd"></div>
<div class="b" style="left:1286px;top:363px;width:1px;height:29px;background:#ddd"></div>
<svg class="b" style="left:1201.5px;top:369.5px;overflow:visible" width="15" height="13" viewBox="0 0 15 13"><path d="M7.6 2.45 L1.65 2.45 L1.65 12.35 L11.55 12.35 L11.55 6.8" stroke="#444" stroke-width="1.9" fill="none"/><path d="M4.5 10.6 L5.02 7.74 L14.13 -0.39 Q15.4 -1.2 16.4 -0.1 Q17.2 1.0 16.27 1.99 L7.16 10.12 Z" fill="#444"/><path d="M12.9 1.0 L14.8 3.1" stroke="#f8f9fa" stroke-width=".7"/></svg>
<svg class="b" style="left:1234px;top:370.8px;" width="13" height="10.5" viewBox="0 0 13 10.5"><rect x="0" y="0" width="2.2" height="2.2" rx=".3" fill="#444"/><rect x="4" y="0.1" width="9" height="2" fill="#444"/><rect x="0" y="4.1" width="2.2" height="2.2" rx=".3" fill="#444"/><rect x="4" y="4.199999999999999" width="9" height="2" fill="#444"/><rect x="0" y="8.3" width="2.2" height="2.2" rx=".3" fill="#444"/><rect x="4" y="8.4" width="9" height="2" fill="#444"/></svg>
<svg class="b" style="left:1263.3px;top:370.9px;" width="14.6" height="10" viewBox="0 0 14.6 10"><rect x="0" y="0" width="14.6" height="10" rx="5" fill="#444"/><circle cx="10" cy="5" r="3.3" fill="#fff"/></svg>
<svg class="b" style="left:1294.8px;top:374.1px;" width="7.4" height="4.8" viewBox="0 0 7.4 4.8"><path d="M0 0 L7.4 0 L3.7 4.8 Z" fill="#444"/></svg>
<div class="b" style="left:266px;top:450px;width:1070px;height:1px;background:#dee2e6"></div>
<div class="a" style="left:290px;top:463.18px;font-size:14.5px;letter-spacing:-0.35px;line-height:22px;color:#212529;">3</div>
<div class="a" style="left:322px;top:463.18px;font-size:14.5px;letter-spacing:-0.013px;line-height:22px;color:#212529;">Digital Painting for</div>
<div class="a" style="left:322px;top:485.18px;font-size:14.5px;letter-spacing:-0.225px;line-height:22px;color:#212529;">Beginners</div>
<div class="a" style="left:481px;top:463.18px;font-size:14.5px;letter-spacing:0.417px;line-height:22px;color:#212529;">Monthly</div>
<div class="a" style="left:562px;top:463.18px;font-size:14.5px;letter-spacing:-0.35px;line-height:22px;color:#212529;">8</div>
<div class="a" style="left:656px;top:463.18px;font-size:14.5px;letter-spacing:-1.05px;line-height:22px;color:#212529;">USD</div>
<div class="a" style="left:656px;top:485.18px;font-size:14.5px;letter-spacing:0.083px;line-height:22px;color:#212529;">1000.00</div>
<div class="a" style="left:756px;top:463.18px;font-size:14.5px;letter-spacing:-1.05px;line-height:22px;color:#212529;">USD</div>
<div class="a" style="left:756px;top:485.18px;font-size:14.5px;letter-spacing:0.083px;line-height:22px;color:#212529;">1000.00</div>
<div class="a" style="left:844px;top:463.18px;font-size:14.5px;letter-spacing:0.15px;line-height:22px;color:#212529;">Admin</div>
<div class="b" style="left:928px;top:468px;width:39px;height:16px;background:#4fa84b;border-radius:3px"></div>
<div class="a" style="left:931.5px;top:464.08px;font-size:11.3px;letter-spacing:-0.4px;line-height:22px;color:#fff;font-weight:bold;">Active</div>
<div class="a" style="left:992px;top:463.18px;font-size:14.5px;letter-spacing:0.473px;line-height:22px;color:#212529;">20/09/2025</div>
<svg class="b" style="left:1094px;top:463px;" width="75" height="75" viewBox="0 0 75 75"><g transform="scale(1.530612244897959)"><path d="M0 0h7v1h-7zM8 0h4v1h-4zM14 0h3v1h-3zM19 0h8v1h-8zM28 0h3v1h-3zM32 0h1v1h-1zM34 0h2v1h-2zM37 0h4v1h-4zM42 0h7v1h-7zM0 1h1v1h-1zM6 1h1v1h-1zM9 1h2v1h-2zM12 1h2v1h-2zM16 1h2v1h-2zM20 1h2v1h-2zM24 1h2v1h-2zM27 1h12v1h-12zM40 1h1v1h-1zM42 1h1v1h-1zM48 1h1v1h-1zM0 2h1v1h-1zM2 2h3v1h-3zM6 2h1v1h-1zM11 2h4v1h-4zM20 2h2v1h-2zM23 2h1v1h-1zM27 2h2v1h-2zM30 2h4v1h-4zM36 2h2v1h-2zM39 2h2v1h-2zM42 2h1v1h-1zM44 2h3v1h-3zM48 2h1v1h-1zM0 3h1v1h-1zM2 3h3v1h-3zM6 3h1v1h-1zM8 3h2v1h-2zM14 3h2v1h-2zM17 3h1v1h-1zM20 3h4v1h-4zM25 3h1v1h-1zM27 3h4v1h-4zM32 3h4v1h-4zM37 3h2v1h-2zM40 3h1v1h-1zM42 3h1v1h-1zM44 3h3v1h-3zM48 3h1v1h-1zM0 4h1v1h-1zM2 4h3v1h-3zM6 4h1v1h-1zM8 4h1v1h-1zM11 4h2v1h-2zM19 4h8v1h-8zM28 4h4v1h-4zM38 4h1v1h-1zM42 4h1v1h-1zM44 4h3v1h-3zM48 4h1v1h-1zM0 5h1v1h-1zM6 5h1v1h-1zM9 5h3v1h-3zM15 5h2v1h-2zM18 5h2v1h-2zM21 5h2v1h-2zM26 5h5v1h-5zM32 5h3v1h-3zM39 5h2v1h-2zM42 5h1v1h-1zM48 5h1v1h-1zM0 6h7v1h-7zM9 6h2v1h-2zM12 6h3v1h-3zM16 6h1v1h-1zM18 6h2v1h-2zM22 6h1v1h-1zM24 6h1v1h-1zM26 6h2v1h-2zM29 6h1v1h-1zM32 6h5v1h-5zM38 6h1v1h-1zM40 6h1v1h-1zM42 6h7v1h-7zM8 7h1v1h-1zM10 7h1v1h-1zM12 7h5v1h-5zM18 7h1v1h-1zM20 7h3v1h-3zM26 7h3v1h-3zM31 7h1v1h-1zM38 7h2v1h-2zM2 8h1v1h-1zM4 8h1v1h-1zM7 8h2v1h-2zM12 8h3v1h-3zM16 8h3v1h-3zM20 8h1v1h-1zM22 8h6v1h-6zM30 8h2v1h-2zM33 8h1v1h-1zM35 8h3v1h-3zM39 8h2v1h-2zM42 8h2v1h-2zM45 8h1v1h-1zM47 8h2v1h-2zM1 9h1v1h-1zM5 9h3v1h-3zM10 9h1v1h-1zM13 9h3v1h-3zM17 9h3v1h-3zM23 9h4v1h-4zM29 9h1v1h-1zM32 9h1v1h-1zM35 9h1v1h-1zM37 9h1v1h-1zM39 9h3v1h-3zM43 9h2v1h-2zM46 9h2v1h-2zM1 10h1v1h-1zM5 10h1v1h-1zM7 10h2v1h-2zM11 10h3v1h-3zM15 10h3v1h-3zM20 10h2v1h-2zM24 10h4v1h-4zM29 10h5v1h-5zM35 10h1v1h-1zM37 10h5v1h-5zM43 10h2v1h-2zM47 10h2v1h-2zM0 11h4v1h-4zM5 11h2v1h-2zM8 11h1v1h-1zM10 11h8v1h-8zM19 11h3v1h-3zM23 11h6v1h-6zM30 11h2v1h-2zM36 11h5v1h-5zM44 11h1v1h-1zM47 11h1v1h-1zM1 12h2v1h-2zM4 12h1v1h-1zM7 12h7v1h-7zM15 12h1v1h-1zM17 12h1v1h-1zM19 12h1v1h-1zM21 12h1v1h-1zM23 12h2v1h-2zM26 12h4v1h-4zM31 12h2v1h-2zM34 12h1v1h-1zM36 12h9v1h-9zM46 12h3v1h-3zM0 13h2v1h-2zM3 13h1v1h-1zM8 13h4v1h-4zM15 13h9v1h-9zM25 13h5v1h-5zM31 13h6v1h-6zM39 13h3v1h-3zM43 13h1v1h-1zM45 13h2v1h-2zM48 13h1v1h-1zM0 14h4v1h-4zM9 14h1v1h-1zM17 14h2v1h-2zM21 14h16v1h-16zM41 14h1v1h-1zM45 14h4v1h-4zM0 15h2v1h-2zM5 15h3v1h-3zM11 15h3v1h-3zM16 15h3v1h-3zM20 15h4v1h-4zM26 15h3v1h-3zM30 15h2v1h-2zM33 15h4v1h-4zM39 15h1v1h-1zM41 15h1v1h-1zM44 15h3v1h-3zM48 15h1v1h-1zM0 16h1v1h-1zM2 16h1v1h-1zM4 16h4v1h-4zM10 16h7v1h-7zM18 16h3v1h-3zM24 16h1v1h-1zM29 16h2v1h-2zM33 16h2v1h-2zM36 16h3v1h-3zM40 16h2v1h-2zM43 16h5v1h-5zM0 17h2v1h-2zM4 17h1v1h-1zM6 17h1v1h-1zM8 17h7v1h-7zM18 17h2v1h-2zM21 17h2v1h-2zM28 17h2v1h-2zM31 17h2v1h-2zM36 17h3v1h-3zM41 17h3v1h-3zM46 17h3v1h-3zM1 18h2v1h-2zM4 18h5v1h-5zM12 18h1v1h-1zM15 18h1v1h-1zM17 18h1v1h-1zM32 18h1v1h-1zM35 18h7v1h-7zM43 18h3v1h-3zM47 18h1v1h-1zM0 19h2v1h-2zM4 19h1v1h-1zM6 19h11v1h-11zM33 19h3v1h-3zM39 19h1v1h-1zM41 19h1v1h-1zM44 19h2v1h-2zM1 20h2v1h-2zM7 20h4v1h-4zM12 20h1v1h-1zM14 20h1v1h-1zM17 20h1v1h-1zM31 20h4v1h-4zM37 20h3v1h-3zM41 20h1v1h-1zM44 20h1v1h-1zM46 20h2v1h-2zM1 21h4v1h-4zM8 21h1v1h-1zM10 21h2v1h-2zM13 21h1v1h-1zM16 21h2v1h-2zM31 21h2v1h-2zM34 21h1v1h-1zM36 21h1v1h-1zM38 21h4v1h-4zM43 21h1v1h-1zM45 21h1v1h-1zM47 21h2v1h-2zM1 22h8v1h-8zM11 22h1v1h-1zM13 22h4v1h-4zM32 22h1v1h-1zM36 22h2v1h-2zM39 22h6v1h-6zM46 22h2v1h-2zM0 23h1v1h-1zM4 23h1v1h-1zM8 23h1v1h-1zM10 23h4v1h-4zM15 23h2v1h-2zM31 23h5v1h-5zM37 23h2v1h-2zM40 23h1v1h-1zM44 23h2v1h-2zM47 23h1v1h-1zM1 24h2v1h-2zM4 24h1v1h-1zM6 24h1v1h-1zM8 24h3v1h-3zM12 24h6v1h-6zM33 24h1v1h-1zM35 24h3v1h-3zM39 24h2v1h-2zM42 24h1v1h-1zM44 24h4v1h-4zM4 25h1v1h-1zM8 25h4v1h-4zM13 25h1v1h-1zM15 25h1v1h-1zM17 25h1v1h-1zM31 25h10v1h-10zM44 25h5v1h-5zM2 26h7v1h-7zM10 26h8v1h-8zM33 26h4v1h-4zM38 26h7v1h-7zM47 26h1v1h-1zM0 27h2v1h-2zM6 27h2v1h-2zM9 27h3v1h-3zM13 27h2v1h-2zM16 27h1v1h-1zM31 27h3v1h-3zM36 27h1v1h-1zM38 27h2v1h-2zM41 27h2v1h-2zM45 27h4v1h-4zM0 28h4v1h-4zM5 28h7v1h-7zM13 28h3v1h-3zM17 28h1v1h-1zM31 28h4v1h-4zM36 28h1v1h-1zM39 28h3v1h-3zM44 28h1v1h-1zM47 28h2v1h-2zM0 29h1v1h-1zM2 29h4v1h-4zM7 29h4v1h-4zM12 29h1v1h-1zM14 29h3v1h-3zM31 29h1v1h-1zM34 29h2v1h-2zM37 29h1v1h-1zM41 29h6v1h-6zM48 29h1v1h-1zM1 30h1v1h-1zM4 30h3v1h-3zM8 30h4v1h-4zM13 30h1v1h-1zM15 30h1v1h-1zM17 30h1v1h-1zM31 30h2v1h-2zM36 30h4v1h-4zM41 30h3v1h-3zM46 30h1v1h-1zM48 30h1v1h-1zM0 31h6v1h-6zM8 31h2v1h-2zM13 31h2v1h-2zM16 31h3v1h-3zM20 31h2v1h-2zM24 31h6v1h-6zM31 31h7v1h-7zM39 31h1v1h-1zM43 31h3v1h-3zM47 31h2v1h-2zM3 32h3v1h-3zM7 32h1v1h-1zM10 32h7v1h-7zM18 32h2v1h-2zM22 32h2v1h-2zM25 32h4v1h-4zM31 32h2v1h-2zM34 32h3v1h-3zM41 32h4v1h-4zM46 32h3v1h-3zM0 33h3v1h-3zM4 33h3v1h-3zM10 33h6v1h-6zM17 33h1v1h-1zM20 33h11v1h-11zM32 33h1v1h-1zM34 33h1v1h-1zM38 33h4v1h-4zM44 33h2v1h-2zM48 33h1v1h-1zM0 34h2v1h-2zM3 34h2v1h-2zM8 34h1v1h-1zM10 34h4v1h-4zM16 34h9v1h-9zM29 34h2v1h-2zM32 34h5v1h-5zM38 34h7v1h-7zM46 34h1v1h-1zM48 34h1v1h-1zM0 35h1v1h-1zM2 35h2v1h-2zM5 35h6v1h-6zM16 35h1v1h-1zM18 35h6v1h-6zM25 35h3v1h-3zM29 35h2v1h-2zM32 35h4v1h-4zM37 35h8v1h-8zM47 35h2v1h-2zM0 36h2v1h-2zM4 36h1v1h-1zM6 36h3v1h-3zM10 36h8v1h-8zM22 36h4v1h-4zM27 36h1v1h-1zM32 36h1v1h-1zM35 36h1v1h-1zM39 36h2v1h-2zM42 36h5v1h-5zM0 37h3v1h-3zM4 37h3v1h-3zM8 37h3v1h-3zM13 37h2v1h-2zM18 37h4v1h-4zM24 37h3v1h-3zM29 37h1v1h-1zM31 37h2v1h-2zM35 37h7v1h-7zM43 37h2v1h-2zM46 37h3v1h-3zM0 38h1v1h-1zM2 38h7v1h-7zM11 38h2v1h-2zM14 38h4v1h-4zM19 38h5v1h-5zM25 38h11v1h-11zM39 38h3v1h-3zM45 38h3v1h-3zM1 39h6v1h-6zM8 39h1v1h-1zM10 39h1v1h-1zM12 39h1v1h-1zM18 39h2v1h-2zM21 39h1v1h-1zM23 39h2v1h-2zM26 39h1v1h-1zM28 39h3v1h-3zM32 39h2v1h-2zM35 39h3v1h-3zM40 39h3v1h-3zM44 39h5v1h-5zM0 40h8v1h-8zM9 40h2v1h-2zM12 40h3v1h-3zM16 40h4v1h-4zM22 40h8v1h-8zM32 40h2v1h-2zM35 40h2v1h-2zM38 40h7v1h-7zM47 40h2v1h-2zM9 41h6v1h-6zM16 41h3v1h-3zM20 41h3v1h-3zM26 41h1v1h-1zM28 41h3v1h-3zM32 41h1v1h-1zM34 41h2v1h-2zM37 41h1v1h-1zM40 41h1v1h-1zM44 41h5v1h-5zM0 42h7v1h-7zM8 42h3v1h-3zM12 42h3v1h-3zM18 42h1v1h-1zM20 42h3v1h-3zM24 42h1v1h-1zM26 42h1v1h-1zM28 42h3v1h-3zM33 42h1v1h-1zM35 42h1v1h-1zM39 42h2v1h-2zM42 42h1v1h-1zM44 42h5v1h-5zM0 43h1v1h-1zM6 43h1v1h-1zM8 43h3v1h-3zM12 43h1v1h-1zM14 43h3v1h-3zM18 43h2v1h-2zM22 43h1v1h-1zM26 43h2v1h-2zM30 43h5v1h-5zM38 43h3v1h-3zM44 43h3v1h-3zM48 43h1v1h-1zM0 44h1v1h-1zM2 44h3v1h-3zM6 44h1v1h-1zM8 44h2v1h-2zM11 44h6v1h-6zM18 44h9v1h-9zM28 44h1v1h-1zM30 44h1v1h-1zM33 44h1v1h-1zM36 44h3v1h-3zM40 44h5v1h-5zM46 44h1v1h-1zM0 45h1v1h-1zM2 45h3v1h-3zM6 45h1v1h-1zM9 45h1v1h-1zM11 45h1v1h-1zM13 45h3v1h-3zM18 45h5v1h-5zM24 45h3v1h-3zM28 45h3v1h-3zM32 45h2v1h-2zM36 45h8v1h-8zM46 45h3v1h-3zM0 46h1v1h-1zM2 46h3v1h-3zM6 46h1v1h-1zM8 46h1v1h-1zM10 46h1v1h-1zM12 46h9v1h-9zM23 46h2v1h-2zM26 46h1v1h-1zM30 46h3v1h-3zM34 46h1v1h-1zM37 46h2v1h-2zM41 46h2v1h-2zM44 46h2v1h-2zM48 46h1v1h-1zM0 47h1v1h-1zM6 47h1v1h-1zM8 47h1v1h-1zM10 47h6v1h-6zM18 47h1v1h-1zM21 47h1v1h-1zM23 47h3v1h-3zM27 47h7v1h-7zM38 47h2v1h-2zM44 47h3v1h-3zM48 47h1v1h-1zM0 48h7v1h-7zM9 48h1v1h-1zM11 48h5v1h-5zM17 48h1v1h-1zM19 48h11v1h-11zM31 48h7v1h-7zM39 48h2v1h-2zM43 48h3v1h-3zM47 48h1v1h-1z" fill="#000"/></g></svg>
<div class="b" style="left:1122px;top:490.5px;width:18.5px;height:18.5px;background:#fff"></div>
<svg class="b" style="left:1122.5px;top:491px;" width="18" height="18" viewBox="0 0 18 18"><g transform="scale(0.5806451612903226)"><circle cx="15.5" cy="15.5" r="15.3" fill="#fff"/><circle cx="15.8" cy="21.2" r="6.9" fill="#4aa6e6"/><circle cx="15.3" cy="18.7" r="3.4" fill="#fff"/><path d="M15.8 21.2 L6 19.4 L8 11 L16 8.8 L21.5 12.5 Z" fill="#fff"/><path d="M12.6 15 Q9.5 16.5 8.4 19.5 Q8.6 22 10.5 22.6 L12.8 19 Z" fill="#1b1c1e"/><path d="M15.2 6.6 Q18.8 6.4 19.8 9.6 Q18.2 11 15.6 11 Z" fill="#1b1c1e"/><path d="M14.4 8 L14.2 14 L12.9 15.5 Z" fill="#1b1c1e"/><path d="M15.1 3.2 Q16.2 3 16.3 3.8 L15.7 10 L13.8 25 L12.9 29.2 L12.7 25 L14.2 9.5 Z" fill="#e6d41c"/></g></svg>
<div class="b" style="left:1194px;top:463px;width:117px;height:29px;background:#f8f9fa;border:1px solid #ddd;border-radius:4px 0 0 4px"></div>
<div class="b" style="left:1225px;top:463px;width:1px;height:29px;background:#ddd"></div>
<div class="b" style="left:1254px;top:463px;width:1px;height:29px;background:#ddd"></div>
<div class="b" style="left:1286px;top:463px;width:1px;height:29px;background:#ddd"></div>
<svg class="b" style="left:1201.5px;top:469.5px;overflow:visible" width="15" height="13" viewBox="0 0 15 13"><path d="M7.6 2.45 L1.65 2.45 L1.65 12.35 L11.55 12.35 L11.55 6.8" stroke="#444" stroke-width="1.9" fill="none"/><path d="M4.5 10.6 L5.02 7.74 L14.13 -0.39 Q15.4 -1.2 16.4 -0.1 Q17.2 1.0 16.27 1.99 L7.16 10.12 Z" fill="#444"/><path d="M12.9 1.0 L14.8 3.1" stroke="#f8f9fa" stroke-width=".7"/></svg>
<svg class="b" style="left:1234px;top:470.8px;" width="13" height="10.5" viewBox="0 0 13 10.5"><rect x="0" y="0" width="2.2" height="2.2" rx=".3" fill="#444"/><rect x="4" y="0.1" width="9" height="2" fill="#444"/><rect x="0" y="4.1" width="2.2" height="2.2" rx=".3" fill="#444"/><rect x="4" y="4.199999999999999" width="9" height="2" fill="#444"/><rect x="0" y="8.3" width="2.2" height="2.2" rx=".3" fill="#444"/><rect x="4" y="8.4" width="9" height="2" fill="#444"/></svg>
<svg class="b" style="left:1263.3px;top:470.9px;" width="14.6" height="10" viewBox="0 0 14.6 10"><rect x="0" y="0" width="14.6" height="10" rx="5" fill="#444"/><circle cx="10" cy="5" r="3.3" fill="#fff"/></svg>
<svg class="b" style="left:1294.8px;top:474.1px;" width="7.4" height="4.8" viewBox="0 0 7.4 4.8"><path d="M0 0 L7.4 0 L3.7 4.8 Z" fill="#444"/></svg>
<div class="b" style="left:266px;top:550px;width:1070px;height:1px;background:#dee2e6"></div>
<div class="a" style="left:290px;top:563.18px;font-size:14.5px;letter-spacing:-0.35px;line-height:22px;color:#212529;">4</div>
<div class="a" style="left:322px;top:563.18px;font-size:14.5px;letter-spacing:0.221px;line-height:22px;color:#212529;">Introduction to</div>
<div class="a" style="left:322px;top:585.18px;font-size:14.5px;letter-spacing:-0.103px;line-height:22px;color:#212529;">Python Programming</div>
<div class="a" style="left:481px;top:563.18px;font-size:14.5px;letter-spacing:0.417px;line-height:22px;color:#212529;">Monthly</div>
<div class="a" style="left:562px;top:563.18px;font-size:14.5px;letter-spacing:0.05px;line-height:22px;color:#212529;">12</div>
<div class="a" style="left:656px;top:563.18px;font-size:14.5px;letter-spacing:-1.05px;line-height:22px;color:#212529;">USD</div>
<div class="a" style="left:656px;top:585.18px;font-size:14.5px;letter-spacing:0.083px;line-height:22px;color:#212529;">1000.00</div>
<div class="a" style="left:756px;top:563.18px;font-size:14.5px;letter-spacing:-1.05px;line-height:22px;color:#212529;">USD</div>
<div class="a" style="left:756px;top:585.18px;font-size:14.5px;letter-spacing:0.05px;line-height:22px;color:#212529;">3000.00</div>
<div class="a" style="left:844px;top:563.18px;font-size:14.5px;letter-spacing:0.15px;line-height:22px;color:#212529;">Admin</div>
<div class="b" style="left:928px;top:568px;width:39px;height:16px;background:#4fa84b;border-radius:3px"></div>
<div class="a" style="left:931.5px;top:564.08px;font-size:11.3px;letter-spacing:-0.4px;line-height:22px;color:#fff;font-weight:bold;">Active</div>
<div class="a" style="left:992px;top:563.18px;font-size:14.5px;letter-spacing:0.473px;line-height:22px;color:#212529;">20/09/2025</div>
<svg class="b" style="left:1094px;top:563px;" width="75" height="75" viewBox="0 0 75 75"><g transform="scale(1.530612244897959)"><path d="M0 0h7v1h-7zM8 0h1v1h-1zM11 0h3v1h-3zM15 0h7v1h-7zM24 0h1v1h-1zM26 0h1v1h-1zM28 0h3v1h-3zM32 0h5v1h-5zM40 0h1v1h-1zM42 0h7v1h-7zM0 1h1v1h-1zM6 1h1v1h-1zM10 1h4v1h-4zM15 1h1v1h-1zM17 1h3v1h-3zM22 1h6v1h-6zM29 1h4v1h-4zM34 1h1v1h-1zM37 1h1v1h-1zM39 1h1v1h-1zM42 1h1v1h-1zM48 1h1v1h-1zM0 2h1v1h-1zM2 2h3v1h-3zM6 2h1v1h-1zM8 2h2v1h-2zM11 2h1v1h-1zM14 2h6v1h-6zM21 2h2v1h-2zM26 2h1v1h-1zM29 2h6v1h-6zM37 2h2v1h-2zM42 2h1v1h-1zM44 2h3v1h-3zM48 2h1v1h-1zM0 3h1v1h-1zM2 3h3v1h-3zM6 3h1v1h-1zM8 3h2v1h-2zM12 3h1v1h-1zM16 3h3v1h-3zM20 3h1v1h-1zM22 3h1v1h-1zM24 3h3v1h-3zM28 3h1v1h-1zM30 3h6v1h-6zM37 3h2v1h-2zM40 3h1v1h-1zM42 3h1v1h-1zM44 3h3v1h-3zM48 3h1v1h-1zM0 4h1v1h-1zM2 4h3v1h-3zM6 4h1v1h-1zM8 4h2v1h-2zM11 4h1v1h-1zM13 4h1v1h-1zM19 4h13v1h-13zM35 4h1v1h-1zM37 4h2v1h-2zM40 4h1v1h-1zM42 4h1v1h-1zM44 4h3v1h-3zM48 4h1v1h-1zM0 5h1v1h-1zM6 5h1v1h-1zM8 5h2v1h-2zM12 5h1v1h-1zM14 5h4v1h-4zM19 5h4v1h-4zM26 5h3v1h-3zM33 5h2v1h-2zM38 5h3v1h-3zM42 5h1v1h-1zM48 5h1v1h-1zM0 6h7v1h-7zM9 6h2v1h-2zM13 6h2v1h-2zM16 6h2v1h-2zM19 6h4v1h-4zM24 6h1v1h-1zM26 6h2v1h-2zM31 6h1v1h-1zM34 6h1v1h-1zM36 6h3v1h-3zM42 6h7v1h-7zM9 7h5v1h-5zM15 7h1v1h-1zM17 7h4v1h-4zM22 7h1v1h-1zM26 7h1v1h-1zM29 7h8v1h-8zM38 7h3v1h-3zM0 8h1v1h-1zM2 8h8v1h-8zM14 8h2v1h-2zM17 8h4v1h-4zM22 8h6v1h-6zM29 8h2v1h-2zM32 8h2v1h-2zM36 8h1v1h-1zM39 8h5v1h-5zM46 8h1v1h-1zM48 8h1v1h-1zM2 9h11v1h-11zM14 9h2v1h-2zM17 9h5v1h-5zM24 9h1v1h-1zM26 9h4v1h-4zM32 9h1v1h-1zM35 9h1v1h-1zM37 9h2v1h-2zM40 9h3v1h-3zM44 9h5v1h-5zM0 10h1v1h-1zM2 10h3v1h-3zM6 10h4v1h-4zM11 10h3v1h-3zM15 10h2v1h-2zM18 10h1v1h-1zM20 10h2v1h-2zM23 10h1v1h-1zM27 10h8v1h-8zM37 10h3v1h-3zM42 10h2v1h-2zM45 10h2v1h-2zM48 10h1v1h-1zM0 11h4v1h-4zM5 11h1v1h-1zM10 11h7v1h-7zM18 11h5v1h-5zM24 11h1v1h-1zM26 11h2v1h-2zM29 11h1v1h-1zM34 11h2v1h-2zM37 11h2v1h-2zM41 11h1v1h-1zM43 11h2v1h-2zM46 11h2v1h-2zM0 12h1v1h-1zM4 12h3v1h-3zM8 12h2v1h-2zM13 12h1v1h-1zM15 12h1v1h-1zM17 12h2v1h-2zM20 12h2v1h-2zM26 12h1v1h-1zM28 12h8v1h-8zM37 12h9v1h-9zM47 12h2v1h-2zM1 13h2v1h-2zM4 13h3v1h-3zM8 13h3v1h-3zM12 13h4v1h-4zM18 13h3v1h-3zM22 13h2v1h-2zM27 13h1v1h-1zM29 13h2v1h-2zM32 13h5v1h-5zM39 13h1v1h-1zM41 13h2v1h-2zM46 13h1v1h-1zM1 14h1v1h-1zM3 14h1v1h-1zM5 14h1v1h-1zM8 14h3v1h-3zM12 14h2v1h-2zM15 14h1v1h-1zM17 14h3v1h-3zM23 14h1v1h-1zM25 14h3v1h-3zM30 14h5v1h-5zM36 14h4v1h-4zM41 14h6v1h-6zM0 15h1v1h-1zM7 15h1v1h-1zM9 15h1v1h-1zM11 15h1v1h-1zM14 15h1v1h-1zM16 15h3v1h-3zM21 15h6v1h-6zM32 15h1v1h-1zM34 15h1v1h-1zM36 15h1v1h-1zM39 15h3v1h-3zM44 15h5v1h-5zM1 16h2v1h-2zM5 16h2v1h-2zM8 16h5v1h-5zM15 16h4v1h-4zM21 16h1v1h-1zM23 16h3v1h-3zM28 16h1v1h-1zM30 16h1v1h-1zM33 16h1v1h-1zM35 16h5v1h-5zM41 16h1v1h-1zM43 16h1v1h-1zM45 16h2v1h-2zM48 16h1v1h-1zM0 17h6v1h-6zM7 17h2v1h-2zM10 17h2v1h-2zM13 17h2v1h-2zM17 17h3v1h-3zM21 17h3v1h-3zM27 17h1v1h-1zM30 17h5v1h-5zM37 17h2v1h-2zM40 17h4v1h-4zM45 17h2v1h-2zM48 17h1v1h-1zM0 18h4v1h-4zM6 18h4v1h-4zM12 18h4v1h-4zM31 18h3v1h-3zM35 18h4v1h-4zM40 18h3v1h-3zM44 18h5v1h-5zM0 19h1v1h-1zM3 19h3v1h-3zM7 19h7v1h-7zM15 19h3v1h-3zM31 19h2v1h-2zM34 19h5v1h-5zM40 19h1v1h-1zM44 19h2v1h-2zM48 19h1v1h-1zM2 20h2v1h-2zM5 20h4v1h-4zM13 20h3v1h-3zM17 20h1v1h-1zM33 20h1v1h-1zM35 20h3v1h-3zM39 20h6v1h-6zM46 20h3v1h-3zM0 21h2v1h-2zM5 21h2v1h-2zM9 21h8v1h-8zM31 21h3v1h-3zM35 21h3v1h-3zM39 21h1v1h-1zM42 21h2v1h-2zM45 21h2v1h-2zM48 21h1v1h-1zM0 22h9v1h-9zM10 22h1v1h-1zM12 22h1v1h-1zM17 22h1v1h-1zM31 22h3v1h-3zM38 22h1v1h-1zM40 22h6v1h-6zM47 22h2v1h-2zM0 23h3v1h-3zM4 23h1v1h-1zM8 23h2v1h-2zM11 23h1v1h-1zM15 23h3v1h-3zM31 23h5v1h-5zM38 23h3v1h-3zM44 23h1v1h-1zM48 23h1v1h-1zM0 24h5v1h-5zM6 24h1v1h-1zM8 24h5v1h-5zM14 24h1v1h-1zM16 24h2v1h-2zM33 24h3v1h-3zM37 24h4v1h-4zM42 24h1v1h-1zM44 24h3v1h-3zM48 24h1v1h-1zM0 25h5v1h-5zM8 25h8v1h-8zM32 25h1v1h-1zM35 25h1v1h-1zM37 25h4v1h-4zM44 25h1v1h-1zM46 25h1v1h-1zM48 25h1v1h-1zM2 26h9v1h-9zM12 26h3v1h-3zM16 26h2v1h-2zM31 26h3v1h-3zM35 26h2v1h-2zM39 26h7v1h-7zM47 26h2v1h-2zM0 27h2v1h-2zM4 27h2v1h-2zM7 27h2v1h-2zM10 27h2v1h-2zM13 27h2v1h-2zM16 27h2v1h-2zM31 27h2v1h-2zM35 27h1v1h-1zM37 27h4v1h-4zM44 27h3v1h-3zM48 27h1v1h-1zM1 28h2v1h-2zM8 28h1v1h-1zM10 28h1v1h-1zM12 28h3v1h-3zM17 28h1v1h-1zM31 28h2v1h-2zM34 28h1v1h-1zM36 28h2v1h-2zM39 28h3v1h-3zM43 28h1v1h-1zM45 28h2v1h-2zM0 29h2v1h-2zM3 29h1v1h-1zM5 29h2v1h-2zM8 29h3v1h-3zM12 29h1v1h-1zM14 29h1v1h-1zM17 29h1v1h-1zM32 29h2v1h-2zM35 29h8v1h-8zM44 29h5v1h-5zM0 30h1v1h-1zM2 30h6v1h-6zM10 30h4v1h-4zM15 30h3v1h-3zM31 30h2v1h-2zM34 30h1v1h-1zM38 30h5v1h-5zM44 30h1v1h-1zM47 30h2v1h-2zM0 31h3v1h-3zM4 31h3v1h-3zM8 31h2v1h-2zM14 31h1v1h-1zM17 31h1v1h-1zM19 31h5v1h-5zM25 31h3v1h-3zM29 31h2v1h-2zM32 31h2v1h-2zM36 31h4v1h-4zM41 31h3v1h-3zM45 31h1v1h-1zM47 31h1v1h-1zM0 32h1v1h-1zM3 32h1v1h-1zM5 32h3v1h-3zM9 32h6v1h-6zM17 32h4v1h-4zM22 32h3v1h-3zM26 32h4v1h-4zM31 32h3v1h-3zM35 32h5v1h-5zM41 32h4v1h-4zM47 32h2v1h-2zM0 33h2v1h-2zM3 33h3v1h-3zM7 33h1v1h-1zM9 33h1v1h-1zM11 33h2v1h-2zM14 33h2v1h-2zM18 33h1v1h-1zM21 33h1v1h-1zM23 33h1v1h-1zM27 33h2v1h-2zM31 33h4v1h-4zM36 33h1v1h-1zM38 33h1v1h-1zM40 33h3v1h-3zM44 33h2v1h-2zM1 34h2v1h-2zM4 34h4v1h-4zM9 34h1v1h-1zM13 34h3v1h-3zM20 34h3v1h-3zM24 34h1v1h-1zM26 34h4v1h-4zM31 34h5v1h-5zM37 34h7v1h-7zM45 34h4v1h-4zM0 35h1v1h-1zM3 35h4v1h-4zM8 35h1v1h-1zM10 35h2v1h-2zM13 35h1v1h-1zM16 35h1v1h-1zM18 35h1v1h-1zM20 35h3v1h-3zM24 35h1v1h-1zM26 35h6v1h-6zM36 35h7v1h-7zM44 35h2v1h-2zM47 35h1v1h-1zM1 36h1v1h-1zM3 36h3v1h-3zM7 36h1v1h-1zM10 36h2v1h-2zM13 36h1v1h-1zM16 36h2v1h-2zM19 36h1v1h-1zM23 36h1v1h-1zM25 36h1v1h-1zM28 36h2v1h-2zM31 36h3v1h-3zM35 36h1v1h-1zM37 36h3v1h-3zM42 36h3v1h-3zM46 36h1v1h-1zM0 37h1v1h-1zM2 37h4v1h-4zM7 37h2v1h-2zM10 37h1v1h-1zM13 37h1v1h-1zM15 37h1v1h-1zM17 37h2v1h-2zM20 37h3v1h-3zM24 37h2v1h-2zM27 37h6v1h-6zM34 37h3v1h-3zM38 37h11v1h-11zM0 38h3v1h-3zM4 38h1v1h-1zM6 38h1v1h-1zM10 38h2v1h-2zM13 38h6v1h-6zM21 38h1v1h-1zM23 38h4v1h-4zM28 38h3v1h-3zM32 38h3v1h-3zM37 38h3v1h-3zM41 38h1v1h-1zM44 38h5v1h-5zM0 39h5v1h-5zM6 39h1v1h-1zM8 39h4v1h-4zM13 39h1v1h-1zM16 39h1v1h-1zM19 39h3v1h-3zM26 39h2v1h-2zM30 39h1v1h-1zM34 39h4v1h-4zM42 39h2v1h-2zM45 39h1v1h-1zM47 39h2v1h-2zM0 40h1v1h-1zM4 40h2v1h-2zM8 40h1v1h-1zM10 40h1v1h-1zM12 40h1v1h-1zM14 40h3v1h-3zM19 40h1v1h-1zM22 40h5v1h-5zM28 40h2v1h-2zM31 40h1v1h-1zM33 40h2v1h-2zM36 40h9v1h-9zM46 40h2v1h-2zM10 41h4v1h-4zM15 41h2v1h-2zM19 41h4v1h-4zM26 41h7v1h-7zM34 41h1v1h-1zM36 41h5v1h-5zM44 41h3v1h-3zM0 42h7v1h-7zM8 42h7v1h-7zM16 42h2v1h-2zM19 42h2v1h-2zM22 42h1v1h-1zM24 42h1v1h-1zM26 42h3v1h-3zM30 42h2v1h-2zM35 42h1v1h-1zM39 42h2v1h-2zM42 42h1v1h-1zM44 42h2v1h-2zM47 42h1v1h-1zM0 43h1v1h-1zM6 43h1v1h-1zM10 43h4v1h-4zM15 43h3v1h-3zM19 43h4v1h-4zM26 43h2v1h-2zM31 43h3v1h-3zM36 43h1v1h-1zM38 43h1v1h-1zM40 43h1v1h-1zM44 43h2v1h-2zM47 43h2v1h-2zM0 44h1v1h-1zM2 44h3v1h-3zM6 44h1v1h-1zM8 44h3v1h-3zM12 44h2v1h-2zM18 44h3v1h-3zM22 44h6v1h-6zM29 44h5v1h-5zM35 44h4v1h-4zM40 44h6v1h-6zM47 44h2v1h-2zM0 45h1v1h-1zM2 45h3v1h-3zM6 45h1v1h-1zM8 45h2v1h-2zM11 45h3v1h-3zM15 45h1v1h-1zM17 45h2v1h-2zM20 45h4v1h-4zM25 45h2v1h-2zM28 45h1v1h-1zM30 45h2v1h-2zM34 45h1v1h-1zM36 45h1v1h-1zM38 45h3v1h-3zM43 45h3v1h-3zM47 45h1v1h-1zM0 46h1v1h-1zM2 46h3v1h-3zM6 46h1v1h-1zM9 46h1v1h-1zM11 46h3v1h-3zM17 46h1v1h-1zM19 46h3v1h-3zM23 46h1v1h-1zM25 46h2v1h-2zM29 46h2v1h-2zM36 46h1v1h-1zM38 46h5v1h-5zM44 46h5v1h-5zM0 47h1v1h-1zM6 47h1v1h-1zM8 47h1v1h-1zM11 47h7v1h-7zM19 47h3v1h-3zM23 47h3v1h-3zM29 47h8v1h-8zM38 47h5v1h-5zM45 47h1v1h-1zM47 47h2v1h-2zM0 48h7v1h-7zM8 48h1v1h-1zM10 48h1v1h-1zM12 48h1v1h-1zM14 48h3v1h-3zM20 48h1v1h-1zM23 48h1v1h-1zM29 48h1v1h-1zM31 48h1v1h-1zM34 48h2v1h-2zM37 48h1v1h-1zM39 48h2v1h-2zM42 48h3v1h-3zM46 48h1v1h-1zM48 48h1v1h-1z" fill="#000"/></g></svg>
<div class="b" style="left:1122px;top:590.5px;width:18.5px;height:18.5px;background:#fff"></div>
<svg class="b" style="left:1122.5px;top:591px;" width="18" height="18" viewBox="0 0 18 18"><g transform="scale(0.5806451612903226)"><circle cx="15.5" cy="15.5" r="15.3" fill="#fff"/><circle cx="15.8" cy="21.2" r="6.9" fill="#4aa6e6"/><circle cx="15.3" cy="18.7" r="3.4" fill="#fff"/><path d="M15.8 21.2 L6 19.4 L8 11 L16 8.8 L21.5 12.5 Z" fill="#fff"/><path d="M12.6 15 Q9.5 16.5 8.4 19.5 Q8.6 22 10.5 22.6 L12.8 19 Z" fill="#1b1c1e"/><path d="M15.2 6.6 Q18.8 6.4 19.8 9.6 Q18.2 11 15.6 11 Z" fill="#1b1c1e"/><path d="M14.4 8 L14.2 14 L12.9 15.5 Z" fill="#1b1c1e"/><path d="M15.1 3.2 Q16.2 3 16.3 3.8 L15.7 10 L13.8 25 L12.9 29.2 L12.7 25 L14.2 9.5 Z" fill="#e6d41c"/></g></svg>
<div class="b" style="left:1194px;top:563px;width:117px;height:29px;background:#f8f9fa;border:1px solid #ddd;border-radius:4px 0 0 4px"></div>
<div class="b" style="left:1225px;top:563px;width:1px;height:29px;background:#ddd"></div>
<div class="b" style="left:1254px;top:563px;width:1px;height:29px;background:#ddd"></div>
<div class="b" style="left:1286px;top:563px;width:1px;height:29px;background:#ddd"></div>
<svg class="b" style="left:1201.5px;top:569.5px;overflow:visible" width="15" height="13" viewBox="0 0 15 13"><path d="M7.6 2.45 L1.65 2.45 L1.65 12.35 L11.55 12.35 L11.55 6.8" stroke="#444" stroke-width="1.9" fill="none"/><path d="M4.5 10.6 L5.02 7.74 L14.13 -0.39 Q15.4 -1.2 16.4 -0.1 Q17.2 1.0 16.27 1.99 L7.16 10.12 Z" fill="#444"/><path d="M12.9 1.0 L14.8 3.1" stroke="#f8f9fa" stroke-width=".7"/></svg>
<svg class="b" style="left:1234px;top:570.8px;" width="13" height="10.5" viewBox="0 0 13 10.5"><rect x="0" y="0" width="2.2" height="2.2" rx=".3" fill="#444"/><rect x="4" y="0.1" width="9" height="2" fill="#444"/><rect x="0" y="4.1" width="2.2" height="2.2" rx=".3" fill="#444"/><rect x="4" y="4.199999999999999" width="9" height="2" fill="#444"/><rect x="0" y="8.3" width="2.2" height="2.2" rx=".3" fill="#444"/><rect x="4" y="8.4" width="9" height="2" fill="#444"/></svg>
<svg class="b" style="left:1263.3px;top:570.9px;" width="14.6" height="10" viewBox="0 0 14.6 10"><rect x="0" y="0" width="14.6" height="10" rx="5" fill="#444"/><circle cx="10" cy="5" r="3.3" fill="#fff"/></svg>
<svg class="b" style="left:1294.8px;top:574.1px;" width="7.4" height="4.8" viewBox="0 0 7.4 4.8"><path d="M0 0 L7.4 0 L3.7 4.8 Z" fill="#444"/></svg>
<div class="b" style="left:266px;top:650px;width:1070px;height:1px;background:#dee2e6"></div>
<div class="a" style="left:290px;top:663.18px;font-size:14.5px;letter-spacing:-0.35px;line-height:22px;color:#212529;">5</div>
<div class="a" style="left:322px;top:663.18px;font-size:14.5px;letter-spacing:0.45px;line-height:22px;color:#212529;">Math</div>
<div class="a" style="left:481px;top:663.18px;font-size:14.5px;letter-spacing:-0.05px;line-height:22px;color:#212529;">One</div>
<div class="a" style="left:481px;top:685.18px;font-size:14.5px;letter-spacing:0.25px;line-height:22px;color:#212529;">Time</div>
<div class="a" style="left:562px;top:663.18px;font-size:14.5px;letter-spacing:-0.35px;line-height:22px;color:#212529;">5</div>
<div class="a" style="left:656px;top:663.18px;font-size:14.5px;letter-spacing:-1.05px;line-height:22px;color:#212529;">USD</div>
<div class="a" style="left:656px;top:685.18px;font-size:14.5px;letter-spacing:0.083px;line-height:22px;color:#212529;">5000.00</div>
<div class="a" style="left:756px;top:663.18px;font-size:14.5px;letter-spacing:-0.521px;line-height:22px;color:#212529;">USD 0.00</div>
<div class="a" style="left:844px;top:663.18px;font-size:14.5px;letter-spacing:0.15px;line-height:22px;color:#212529;">Admin</div>
<div class="b" style="left:928px;top:668px;width:39px;height:16px;background:#4fa84b;border-radius:3px"></div>
<div class="a" style="left:931.5px;top:664.08px;font-size:11.3px;letter-spacing:-0.4px;line-height:22px;color:#fff;font-weight:bold;">Active</div>
<div class="a" style="left:992px;top:663.18px;font-size:14.5px;letter-spacing:0.473px;line-height:22px;color:#212529;">20/09/2025</div>
<svg class="b" style="left:1094px;top:663px;" width="75" height="75" viewBox="0 0 75 75"><g transform="scale(1.530612244897959)"><path d="M0 0h7v1h-7zM8 0h1v1h-1zM10 0h1v1h-1zM12 0h1v1h-1zM15 0h13v1h-13zM30 0h2v1h-2zM33 0h1v1h-1zM35 0h1v1h-1zM37 0h1v1h-1zM40 0h1v1h-1zM42 0h7v1h-7zM0 1h1v1h-1zM6 1h1v1h-1zM8 1h1v1h-1zM10 1h3v1h-3zM14 1h1v1h-1zM20 1h2v1h-2zM23 1h2v1h-2zM26 1h6v1h-6zM33 1h3v1h-3zM37 1h1v1h-1zM39 1h1v1h-1zM42 1h1v1h-1zM48 1h1v1h-1zM0 2h1v1h-1zM2 2h3v1h-3zM6 2h1v1h-1zM8 2h3v1h-3zM12 2h3v1h-3zM16 2h4v1h-4zM21 2h2v1h-2zM24 2h2v1h-2zM28 2h6v1h-6zM35 2h3v1h-3zM39 2h1v1h-1zM42 2h1v1h-1zM44 2h3v1h-3zM48 2h1v1h-1zM0 3h1v1h-1zM2 3h3v1h-3zM6 3h1v1h-1zM10 3h6v1h-6zM17 3h1v1h-1zM19 3h3v1h-3zM25 3h4v1h-4zM30 3h1v1h-1zM32 3h5v1h-5zM38 3h2v1h-2zM42 3h1v1h-1zM44 3h3v1h-3zM48 3h1v1h-1zM0 4h1v1h-1zM2 4h3v1h-3zM6 4h1v1h-1zM9 4h2v1h-2zM12 4h4v1h-4zM18 4h2v1h-2zM22 4h6v1h-6zM29 4h5v1h-5zM35 4h1v1h-1zM39 4h2v1h-2zM42 4h1v1h-1zM44 4h3v1h-3zM48 4h1v1h-1zM0 5h1v1h-1zM6 5h1v1h-1zM8 5h1v1h-1zM10 5h5v1h-5zM16 5h1v1h-1zM18 5h5v1h-5zM26 5h2v1h-2zM29 5h3v1h-3zM33 5h5v1h-5zM39 5h2v1h-2zM42 5h1v1h-1zM48 5h1v1h-1zM0 6h7v1h-7zM8 6h2v1h-2zM11 6h1v1h-1zM14 6h2v1h-2zM17 6h1v1h-1zM20 6h3v1h-3zM24 6h1v1h-1zM26 6h3v1h-3zM31 6h2v1h-2zM34 6h2v1h-2zM38 6h3v1h-3zM42 6h7v1h-7zM8 7h5v1h-5zM16 7h3v1h-3zM21 7h2v1h-2zM26 7h2v1h-2zM29 7h2v1h-2zM32 7h2v1h-2zM35 7h3v1h-3zM0 8h1v1h-1zM2 8h3v1h-3zM6 8h4v1h-4zM12 8h2v1h-2zM16 8h1v1h-1zM18 8h2v1h-2zM22 8h13v1h-13zM36 8h3v1h-3zM40 8h7v1h-7zM48 8h1v1h-1zM1 9h3v1h-3zM5 9h2v1h-2zM8 9h3v1h-3zM12 9h3v1h-3zM19 9h4v1h-4zM24 9h2v1h-2zM27 9h6v1h-6zM34 9h1v1h-1zM36 9h3v1h-3zM40 9h3v1h-3zM44 9h1v1h-1zM0 10h3v1h-3zM6 10h1v1h-1zM8 10h1v1h-1zM10 10h4v1h-4zM17 10h1v1h-1zM20 10h1v1h-1zM22 10h5v1h-5zM28 10h2v1h-2zM31 10h1v1h-1zM34 10h3v1h-3zM40 10h1v1h-1zM42 10h2v1h-2zM46 10h3v1h-3zM0 11h3v1h-3zM4 11h8v1h-8zM14 11h2v1h-2zM17 11h1v1h-1zM20 11h3v1h-3zM24 11h5v1h-5zM31 11h6v1h-6zM38 11h1v1h-1zM40 11h1v1h-1zM42 11h3v1h-3zM48 11h1v1h-1zM1 12h4v1h-4zM6 12h4v1h-4zM11 12h6v1h-6zM18 12h1v1h-1zM20 12h3v1h-3zM24 12h5v1h-5zM30 12h1v1h-1zM34 12h2v1h-2zM37 12h3v1h-3zM41 12h2v1h-2zM45 12h1v1h-1zM48 12h1v1h-1zM0 13h2v1h-2zM3 13h1v1h-1zM5 13h2v1h-2zM8 13h1v1h-1zM10 13h3v1h-3zM14 13h1v1h-1zM17 13h1v1h-1zM20 13h3v1h-3zM24 13h2v1h-2zM27 13h1v1h-1zM29 13h1v1h-1zM31 13h2v1h-2zM36 13h2v1h-2zM46 13h1v1h-1zM48 13h1v1h-1zM0 14h5v1h-5zM6 14h4v1h-4zM11 14h1v1h-1zM15 14h3v1h-3zM19 14h2v1h-2zM23 14h6v1h-6zM33 14h7v1h-7zM41 14h2v1h-2zM44 14h1v1h-1zM46 14h3v1h-3zM1 15h2v1h-2zM5 15h5v1h-5zM11 15h1v1h-1zM14 15h1v1h-1zM16 15h1v1h-1zM18 15h7v1h-7zM26 15h2v1h-2zM29 15h9v1h-9zM39 15h1v1h-1zM41 15h5v1h-5zM47 15h1v1h-1zM0 16h6v1h-6zM8 16h4v1h-4zM13 16h2v1h-2zM16 16h12v1h-12zM29 16h1v1h-1zM31 16h3v1h-3zM35 16h1v1h-1zM38 16h1v1h-1zM41 16h5v1h-5zM47 16h2v1h-2zM0 17h5v1h-5zM7 17h2v1h-2zM13 17h1v1h-1zM15 17h6v1h-6zM22 17h5v1h-5zM28 17h7v1h-7zM36 17h3v1h-3zM40 17h2v1h-2zM45 17h1v1h-1zM47 17h1v1h-1zM0 18h12v1h-12zM13 18h3v1h-3zM31 18h3v1h-3zM35 18h5v1h-5zM43 18h1v1h-1zM45 18h3v1h-3zM0 19h1v1h-1zM2 19h1v1h-1zM6 19h4v1h-4zM11 19h2v1h-2zM15 19h3v1h-3zM31 19h1v1h-1zM35 19h1v1h-1zM37 19h2v1h-2zM41 19h5v1h-5zM47 19h2v1h-2zM0 20h10v1h-10zM12 20h4v1h-4zM17 20h1v1h-1zM31 20h6v1h-6zM38 20h1v1h-1zM40 20h2v1h-2zM43 20h1v1h-1zM45 20h2v1h-2zM0 21h2v1h-2zM3 21h5v1h-5zM10 21h2v1h-2zM13 21h1v1h-1zM15 21h1v1h-1zM17 21h1v1h-1zM32 21h3v1h-3zM38 21h2v1h-2zM41 21h1v1h-1zM43 21h2v1h-2zM46 21h1v1h-1zM48 21h1v1h-1zM0 22h10v1h-10zM12 22h6v1h-6zM31 22h2v1h-2zM34 22h4v1h-4zM39 22h7v1h-7zM47 22h1v1h-1zM0 23h1v1h-1zM3 23h2v1h-2zM8 23h1v1h-1zM10 23h2v1h-2zM15 23h1v1h-1zM17 23h1v1h-1zM31 23h7v1h-7zM39 23h2v1h-2zM44 23h1v1h-1zM46 23h3v1h-3zM2 24h1v1h-1zM4 24h1v1h-1zM6 24h1v1h-1zM8 24h7v1h-7zM16 24h2v1h-2zM33 24h6v1h-6zM40 24h1v1h-1zM42 24h1v1h-1zM44 24h3v1h-3zM1 25h2v1h-2zM4 25h1v1h-1zM8 25h3v1h-3zM13 25h2v1h-2zM16 25h2v1h-2zM34 25h4v1h-4zM40 25h1v1h-1zM44 25h3v1h-3zM48 25h1v1h-1zM0 26h9v1h-9zM10 26h2v1h-2zM13 26h5v1h-5zM31 26h5v1h-5zM38 26h1v1h-1zM40 26h6v1h-6zM47 26h1v1h-1zM0 27h1v1h-1zM2 27h4v1h-4zM7 27h1v1h-1zM12 27h1v1h-1zM15 27h1v1h-1zM17 27h1v1h-1zM34 27h3v1h-3zM39 27h1v1h-1zM41 27h3v1h-3zM45 27h3v1h-3zM0 28h3v1h-3zM4 28h3v1h-3zM8 28h2v1h-2zM12 28h5v1h-5zM31 28h4v1h-4zM36 28h3v1h-3zM41 28h8v1h-8zM0 29h3v1h-3zM4 29h1v1h-1zM6 29h5v1h-5zM12 29h1v1h-1zM16 29h1v1h-1zM32 29h2v1h-2zM36 29h1v1h-1zM38 29h1v1h-1zM40 29h2v1h-2zM43 29h2v1h-2zM46 29h2v1h-2zM0 30h3v1h-3zM8 30h3v1h-3zM12 30h1v1h-1zM14 30h1v1h-1zM16 30h1v1h-1zM31 30h1v1h-1zM34 30h4v1h-4zM41 30h1v1h-1zM43 30h1v1h-1zM45 30h4v1h-4zM1 31h2v1h-2zM4 31h1v1h-1zM6 31h4v1h-4zM11 31h3v1h-3zM17 31h1v1h-1zM21 31h2v1h-2zM26 31h1v1h-1zM28 31h4v1h-4zM34 31h8v1h-8zM43 31h1v1h-1zM0 32h3v1h-3zM5 32h2v1h-2zM8 32h1v1h-1zM11 32h1v1h-1zM13 32h1v1h-1zM15 32h2v1h-2zM18 32h5v1h-5zM25 32h6v1h-6zM35 32h9v1h-9zM0 33h2v1h-2zM3 33h1v1h-1zM5 33h7v1h-7zM15 33h4v1h-4zM20 33h5v1h-5zM27 33h4v1h-4zM34 33h15v1h-15zM0 34h1v1h-1zM2 34h4v1h-4zM7 34h2v1h-2zM10 34h2v1h-2zM13 34h1v1h-1zM15 34h3v1h-3zM19 34h2v1h-2zM22 34h5v1h-5zM28 34h3v1h-3zM32 34h3v1h-3zM36 34h3v1h-3zM40 34h1v1h-1zM43 34h4v1h-4zM3 35h1v1h-1zM6 35h3v1h-3zM10 35h2v1h-2zM13 35h1v1h-1zM15 35h1v1h-1zM19 35h3v1h-3zM23 35h1v1h-1zM25 35h5v1h-5zM34 35h1v1h-1zM37 35h5v1h-5zM43 35h5v1h-5zM3 36h2v1h-2zM6 36h1v1h-1zM8 36h5v1h-5zM14 36h3v1h-3zM19 36h1v1h-1zM22 36h3v1h-3zM26 36h2v1h-2zM29 36h3v1h-3zM33 36h3v1h-3zM37 36h4v1h-4zM42 36h1v1h-1zM44 36h2v1h-2zM48 36h1v1h-1zM0 37h1v1h-1zM2 37h2v1h-2zM10 37h3v1h-3zM14 37h2v1h-2zM17 37h1v1h-1zM19 37h1v1h-1zM21 37h1v1h-1zM25 37h1v1h-1zM27 37h3v1h-3zM33 37h4v1h-4zM38 37h1v1h-1zM41 37h3v1h-3zM47 37h1v1h-1zM1 38h6v1h-6zM8 38h2v1h-2zM12 38h4v1h-4zM18 38h1v1h-1zM20 38h1v1h-1zM22 38h3v1h-3zM27 38h3v1h-3zM31 38h5v1h-5zM37 38h1v1h-1zM39 38h1v1h-1zM41 38h1v1h-1zM44 38h3v1h-3zM48 38h1v1h-1zM2 39h8v1h-8zM11 39h5v1h-5zM17 39h2v1h-2zM20 39h5v1h-5zM27 39h3v1h-3zM31 39h1v1h-1zM35 39h1v1h-1zM37 39h4v1h-4zM42 39h1v1h-1zM44 39h5v1h-5zM1 40h1v1h-1zM3 40h3v1h-3zM7 40h1v1h-1zM9 40h3v1h-3zM15 40h1v1h-1zM17 40h2v1h-2zM20 40h9v1h-9zM30 40h1v1h-1zM32 40h3v1h-3zM36 40h2v1h-2zM39 40h10v1h-10zM8 41h7v1h-7zM16 41h2v1h-2zM19 41h2v1h-2zM22 41h1v1h-1zM26 41h1v1h-1zM29 41h3v1h-3zM33 41h1v1h-1zM36 41h2v1h-2zM39 41h2v1h-2zM44 41h5v1h-5zM0 42h7v1h-7zM9 42h1v1h-1zM11 42h4v1h-4zM16 42h1v1h-1zM18 42h5v1h-5zM24 42h1v1h-1zM26 42h2v1h-2zM29 42h1v1h-1zM31 42h7v1h-7zM39 42h2v1h-2zM42 42h1v1h-1zM44 42h2v1h-2zM47 42h2v1h-2zM0 43h1v1h-1zM6 43h1v1h-1zM8 43h2v1h-2zM11 43h2v1h-2zM14 43h2v1h-2zM18 43h3v1h-3zM22 43h1v1h-1zM26 43h7v1h-7zM35 43h1v1h-1zM37 43h4v1h-4zM44 43h3v1h-3zM48 43h1v1h-1zM0 44h1v1h-1zM2 44h3v1h-3zM6 44h1v1h-1zM10 44h3v1h-3zM15 44h5v1h-5zM21 44h8v1h-8zM30 44h1v1h-1zM32 44h3v1h-3zM36 44h2v1h-2zM39 44h6v1h-6zM46 44h3v1h-3zM0 45h1v1h-1zM2 45h3v1h-3zM6 45h1v1h-1zM8 45h4v1h-4zM13 45h4v1h-4zM19 45h7v1h-7zM29 45h2v1h-2zM34 45h1v1h-1zM36 45h2v1h-2zM39 45h2v1h-2zM42 45h7v1h-7zM0 46h1v1h-1zM2 46h3v1h-3zM6 46h1v1h-1zM9 46h2v1h-2zM14 46h7v1h-7zM22 46h2v1h-2zM25 46h3v1h-3zM29 46h2v1h-2zM32 46h4v1h-4zM37 46h2v1h-2zM40 46h1v1h-1zM42 46h5v1h-5zM48 46h1v1h-1zM0 47h1v1h-1zM6 47h1v1h-1zM8 47h3v1h-3zM12 47h2v1h-2zM15 47h3v1h-3zM20 47h6v1h-6zM27 47h7v1h-7zM35 47h8v1h-8zM44 47h2v1h-2zM47 47h1v1h-1zM0 48h7v1h-7zM8 48h2v1h-2zM13 48h6v1h-6zM20 48h1v1h-1zM22 48h4v1h-4zM28 48h4v1h-4zM33 48h3v1h-3zM37 48h1v1h-1zM39 48h1v1h-1zM43 48h2v1h-2zM48 48h1v1h-1z" fill="#000"/></g></svg>
<div class="b" style="left:1122px;top:690.5px;width:18.5px;height:18.5px;background:#fff"></div>
<svg class="b" style="left:1122.5px;top:691px;" width="18" height="18" viewBox="0 0 18 18"><g transform="scale(0.5806451612903226)"><circle cx="15.5" cy="15.5" r="15.3" fill="#fff"/><circle cx="15.8" cy="21.2" r="6.9" fill="#4aa6e6"/><circle cx="15.3" cy="18.7" r="3.4" fill="#fff"/><path d="M15.8 21.2 L6 19.4 L8 11 L16 8.8 L21.5 12.5 Z" fill="#fff"/><path d="M12.6 15 Q9.5 16.5 8.4 19.5 Q8.6 22 10.5 22.6 L12.8 19 Z" fill="#1b1c1e"/><path d="M15.2 6.6 Q18.8 6.4 19.8 9.6 Q18.2 11 15.6 11 Z" fill="#1b1c1e"/><path d="M14.4 8 L14.2 14 L12.9 15.5 Z" fill="#1b1c1e"/><path d="M15.1 3.2 Q16.2 3 16.3 3.8 L15.7 10 L13.8 25 L12.9 29.2 L12.7 25 L14.2 9.5 Z" fill="#e6d41c"/></g></svg>
<div class="b" style="left:1194px;top:663px;width:117px;height:29px;background:#f8f9fa;border:1px solid #ddd;border-radius:4px 0 0 4px"></div>
<div class="b" style="left:1225px;top:663px;width:1px;height:29px;background:#ddd"></div>
<div class="b" style="left:1254px;top:663px;width:1px;height:29px;background:#ddd"></div>
<div class="b" style="left:1286px;top:663px;width:1px;height:29px;background:#ddd"></div>
<svg class="b" style="left:1201.5px;top:669.5px;overflow:visible" width="15" height="13" viewBox="0 0 15 13"><path d="M7.6 2.45 L1.65 2.45 L1.65 12.35 L11.55 12.35 L11.55 6.8" stroke="#444" stroke-width="1.9" fill="none"/><path d="M4.5 10.6 L5.02 7.74 L14.13 -0.39 Q15.4 -1.2 16.4 -0.1 Q17.2 1.0 16.27 1.99 L7.16 10.12 Z" fill="#444"/><path d="M12.9 1.0 L14.8 3.1" stroke="#f8f9fa" stroke-width=".7"/></svg>
<svg class="b" style="left:1234px;top:670.8px;" width="13" height="10.5" viewBox="0 0 13 10.5"><rect x="0" y="0" width="2.2" height="2.2" rx=".3" fill="#444"/><rect x="4" y="0.1" width="9" height="2" fill="#444"/><rect x="0" y="4.1" width="2.2" height="2.2" rx=".3" fill="#444"/><rect x="4" y="4.199999999999999" width="9" height="2" fill="#444"/><rect x="0" y="8.3" width="2.2" height="2.2" rx=".3" fill="#444"/><rect x="4" y="8.4" width="9" height="2" fill="#444"/></svg>
<svg class="b" style="left:1263.3px;top:670.9px;" width="14.6" height="10" viewBox="0 0 14.6 10"><rect x="0" y="0" width="14.6" height="10" rx="5" fill="#444"/><circle cx="10" cy="5" r="3.3" fill="#fff"/></svg>
<svg class="b" style="left:1294.8px;top:674.1px;" width="7.4" height="4.8" viewBox="0 0 7.4 4.8"><path d="M0 0 L7.4 0 L3.7 4.8 Z" fill="#444"/></svg>
<div class="b" style="left:1183px;top:256px;width:49px;height:45px;border:8px solid #ed1c24"></div>
<div class="b" style="left:250px;top:766px;width:1101px;height:55px;background:#fff;border-top:1px solid #dee2e6"></div>
<div class="a" style="left:604px;top:783px;font-size:15px;letter-spacing:-0.53px;line-height:22px;color:#869099">Copyright © 2025 <b style="color:#3c7ae0">CoachSys</b>. A product of <b style="color:#52b788">CGIT</b>. Version: 7.0.0.</div>
<div class="b" style="left:1236px;top:783px;width:100px;height:27px;border-radius:3px;overflow:hidden;background:linear-gradient(#59a9de 0,#59a9de 50%,#3b78bf 50%,#3b78bf 100%)"></div>
<svg class="b" style="left:1238px;top:768px;" width="32" height="40" viewBox="0 0 32 40"><path d="M1.8 38.5 Q2.5 29 9.5 27 L16.4 26 L23.3 27 Q30.3 29 31 38.5 Z" fill="#f4f4f4"/><path d="M12 26.4 L16.4 30.5 L20.8 26.4 L18.8 25.5 L14 25.5 Z" fill="#9aa3a8"/><rect x="15.7" y="29.5" width="1.4" height="9" fill="#3cb0c0"/><ellipse cx="16.4" cy="14.5" rx="8" ry="10" fill="#e8c7a2"/><path d="M16.4 4.5 L16.4 24.5 Q22 24 24.2 16 L24.2 10 Z" fill="#dcb48e" opacity=".6"/><path d="M7.6 15 Q7 2.4 16.4 2.2 Q25.8 2.4 25.2 15 Q23.8 8 16.4 7.6 Q9 8 7.6 15Z" fill="#262626"/><path d="M7.5 15.5 Q6.6 4 16.4 3.8 Q26.2 4 25.3 15.5" stroke="#8fd2ee" stroke-width="1.5" fill="none"/><rect x="5.6" y="12.5" width="3.2" height="6" rx="1.3" fill="#3fb6c6"/><rect x="24" y="12.5" width="3.2" height="6" rx="1.3" fill="#3fb6c6"/><path d="M25.5 17.5 Q25 22.5 18 23.6" stroke="#c9d4da" stroke-width="1.3" fill="none"/><circle cx="17.8" cy="23.6" r="1.2" fill="#8fb0c8"/></svg>
<div class="a" style="left:1270px;top:785.63px;font-size:15.5px;letter-spacing:-0.3px;line-height:22px;color:#fff;font-weight:bold;transform:scaleX(.855);transform-origin:0 0;">SUPPORT</div>
<div class="b" style="left:0;top:0;width:250px;height:821px;background:#343a40;box-shadow:0 0 7px rgba(0,0,0,.25);z-index:2">
<div class="b" style="left:0;top:54px;width:250px;height:1px;background:#4b545c"></div>
<div class="a" style="left:59px;top:15.07px;font-size:20px;letter-spacing:-0.812px;line-height:22px;color:#fff;-webkit-text-stroke:.45px #fff;">ABC Learning Institute</div>
<svg class="b" style="left:20.5px;top:9.3px;border-radius:50%;box-shadow:0 1px 3px rgba(0,0,0,.3)" width="31" height="31" viewBox="0 0 31 31"><g transform="scale(1.0)"><circle cx="15.5" cy="15.5" r="15.3" fill="#2f343a"/><circle cx="15.8" cy="21.2" r="6.9" fill="#4aa6e6"/><circle cx="15.3" cy="18.7" r="3.4" fill="#2f343a"/><path d="M15.8 21.2 L6 19.4 L8 11 L16 8.8 L21.5 12.5 Z" fill="#2f343a"/><path d="M12.6 15 Q9.5 16.5 8.4 19.5 Q8.6 22 10.5 22.6 L12.8 19 Z" fill="#1b1c1e"/><path d="M15.2 6.6 Q18.8 6.4 19.8 9.6 Q18.2 11 15.6 11 Z" fill="#1b1c1e"/><path d="M14.4 8 L14.2 14 L12.9 15.5 Z" fill="#1b1c1e"/><path d="M15.1 3.2 Q16.2 3 16.3 3.8 L15.7 10 L13.8 25 L12.9 29.2 L12.7 25 L14.2 9.5 Z" fill="#e6d41c"/></g></svg>
<div class="a" style="left:45px;top:71.11px;font-size:14.1px;letter-spacing:0.025px;line-height:22px;color:#c2c7d0;-webkit-text-stroke:.3px #c2c7d0;">Dashboard</div>
<svg class="b" style="left:24.6px;top:75px;" width="16.4" height="13.4" viewBox="0 0 16.4 13.4"><path d="M1.2 6.6 L8.2 1.2 L15.2 6.6" stroke="#c2c7d0" stroke-width="1.9" fill="none" stroke-linecap="round" stroke-linejoin="round"/><rect x="11.3" y="0.6" width="2.6" height="4.2" fill="#c2c7d0"/><path d="M2.6 7.4 L8.2 3.2 L13.8 7.4 L13.8 13 L9.6 13 L9.6 9.6 L6.8 9.6 L6.8 13 L2.6 13 Z" fill="#c2c7d0"/></svg>
<div class="a" style="left:20px;top:110.41px;font-size:14.1px;letter-spacing:0.128px;line-height:22px;color:#d0d4db;-webkit-text-stroke:.3px #d0d4db;">ADMINISTRATIVE</div>
<div class="a" style="left:45px;top:148.81px;font-size:14.1px;letter-spacing:-0.128px;line-height:22px;color:#c2c7d0;-webkit-text-stroke:.3px #c2c7d0;">Admissions</div>
<svg class="b" style="left:24.6px;top:152.7px;" width="16.4" height="14.6" viewBox="0 0 16.4 14.6"><path d="M8.2 0.3 L16.4 7 L14.4 7 L14.4 14.3 L2 14.3 L2 7 L0 7 Z" fill="#c2c7d0"/><rect x="11" y="0.8" width="3" height="4" fill="#c2c7d0"/><circle cx="8.2" cy="6.6" r="1.8" fill="#343a40"/><path d="M4.9 12 Q5.2 9.1 8.2 9.1 Q11.2 9.1 11.5 12 Z" fill="#343a40"/></svg>
<svg class="b" style="left:218px;top:154.3px;" width="8" height="11" viewBox="0 0 8 11"><path d="M6.2 1.4 L2 5.4 L6.2 9.4" stroke="#c2c7d0" stroke-width="2.5" fill="none" stroke-linecap="round" stroke-linejoin="round"/></svg>
<div class="b" style="left:8px;top:182px;width:234px;height:37px;background:#3f79eb;border-radius:4px;box-shadow:0 1px 3px rgba(0,0,0,.12),0 1px 2px rgba(0,0,0,.24)"></div>
<div class="a" style="left:45px;top:189.31px;font-size:14.1px;letter-spacing:-0.317px;line-height:22px;color:#fff;-webkit-text-stroke:.3px #fff;">Courses</div>
<svg class="b" style="left:26.4px;top:193.6px;" width="13" height="14.4" viewBox="0 0 13 14.4"><path d="M2.5 0 L13 0 L13 14.4 L2.8 14.4 Q0 14.4 0 11.6 L0 2.5 Q0 0 2.5 0 Z" fill="#fff"/><rect x="4" y="3.3" width="6.3" height="1" fill="#3f79eb" opacity=".75"/><rect x="4" y="5.3" width="6.3" height="1" fill="#3f79eb" opacity=".75"/><rect x="2.6" y="10.4" width="8.3" height="2" rx=".5" fill="#3f79eb"/></svg>
<svg class="b" style="left:216.6px;top:196.6px;" width="10.4" height="6.6" viewBox="0 0 10.4 6.6"><path d="M1.4 1.4 L5.2 5 L9 1.4" stroke="#fff" stroke-width="2.5" fill="none" stroke-linecap="round" stroke-linejoin="round"/></svg>
<div class="a" style="left:45px;top:230.81px;font-size:14.1px;letter-spacing:-0.117px;line-height:22px;color:#c2c7d0;-webkit-text-stroke:.3px #c2c7d0;">Add New</div>
<svg class="b" style="left:25.5px;top:236.3px;" width="14.2" height="12.6" viewBox="0 0 14.2 12.6"><circle cx="7.1" cy="6.3" r="5.9" stroke="#c2c7d0" stroke-width="1.6" fill="none"/></svg>
<div class="b" style="left:8px;top:263px;width:234px;height:37.7px;background:#eaebed;border-radius:4px;box-shadow:inset 0 0 0 1px rgba(255,255,255,.5)"></div>
<div class="a" style="left:45px;top:270.81px;font-size:14.1px;letter-spacing:-0.09px;line-height:22px;color:#343a40;-webkit-text-stroke:.3px #343a40;">All Courses</div>
<svg class="b" style="left:25.5px;top:276.3px;" width="14.2" height="12.6" viewBox="0 0 14.2 12.6"><circle cx="7.1" cy="6.3" r="5.9" stroke="#343a40" stroke-width="1.6" fill="none"/></svg>
<div class="a" style="left:45px;top:311.81px;font-size:14.1px;letter-spacing:-0.183px;line-height:22px;color:#c2c7d0;-webkit-text-stroke:.3px #c2c7d0;">Batches</div>
<svg class="b" style="left:25.2px;top:316px;" width="15" height="13" viewBox="0 0 15 13"><rect x="0" y="0" width="4.4" height="3.8" rx=".4" fill="#c2c7d0"/><rect x="0" y="4.6" width="4.4" height="3.8" rx=".4" fill="#c2c7d0"/><rect x="0" y="9.2" width="4.4" height="3.8" rx=".4" fill="#c2c7d0"/><rect x="5.3" y="0" width="4.4" height="3.8" rx=".4" fill="#c2c7d0"/><rect x="5.3" y="4.6" width="4.4" height="3.8" rx=".4" fill="#c2c7d0"/><rect x="5.3" y="9.2" width="4.4" height="3.8" rx=".4" fill="#c2c7d0"/><rect x="10.6" y="0" width="4.4" height="3.8" rx=".4" fill="#c2c7d0"/><rect x="10.6" y="4.6" width="4.4" height="3.8" rx=".4" fill="#c2c7d0"/><rect x="10.6" y="9.2" width="4.4" height="3.8" rx=".4" fill="#c2c7d0"/></svg>
<svg class="b" style="left:218px;top:317.3px;" width="8" height="11" viewBox="0 0 8 11"><path d="M6.2 1.4 L2 5.4 L6.2 9.4" stroke="#c2c7d0" stroke-width="2.5" fill="none" stroke-linecap="round" stroke-linejoin="round"/></svg>
<div class="a" style="left:45px;top:352.81px;font-size:14.1px;letter-spacing:-0.422px;line-height:22px;color:#c2c7d0;-webkit-text-stroke:.3px #c2c7d0;">Class Schedules</div>
<svg class="b" style="left:26.1px;top:356.6px;" width="13.7" height="14.4" viewBox="0 0 13.7 14.4"><rect x="3.3" y="0" width="1.8" height="2.6" rx=".8" fill="#c2c7d0"/><rect x="8.6" y="0" width="1.8" height="2.6" rx=".8" fill="#c2c7d0"/><path d="M0 4.4 L0 3 Q0 1.5 1.5 1.5 L12.2 1.5 Q13.7 1.5 13.7 3 L13.7 4.4 Z" fill="#c2c7d0"/><path d="M0 5.4 L13.7 5.4 L13.7 13.2 Q13.7 14.4 12.5 14.4 L1.2 14.4 Q0 14.4 0 13.2 Z" fill="#c2c7d0"/><path d="M3.9 9.8 L6 11.9 L9.9 8" stroke="#343a40" stroke-width="1.4" fill="none"/></svg>
<svg class="b" style="left:218px;top:358.3px;" width="8" height="11" viewBox="0 0 8 11"><path d="M6.2 1.4 L2 5.4 L6.2 9.4" stroke="#c2c7d0" stroke-width="2.5" fill="none" stroke-linecap="round" stroke-linejoin="round"/></svg>
<div class="a" style="left:45px;top:393.81px;font-size:14.1px;letter-spacing:0.15px;line-height:22px;color:#c2c7d0;-webkit-text-stroke:.3px #c2c7d0;">Daily Attendances</div>
<svg class="b" style="left:27px;top:397.6px;" width="11.3" height="14.4" viewBox="0 0 11.3 14.4"><rect x="0" y="1.6" width="11.3" height="12.8" rx="1.2" fill="#c2c7d0"/><circle cx="5.65" cy="1.8" r="1.8" fill="#c2c7d0"/><circle cx="5.65" cy="1.9" r=".6" fill="#343a40"/><rect x="2.3" y="5.3" width="1.3" height="1" fill="#343a40" opacity=".8"/><rect x="4.7" y="5.3" width="4.3" height="1" fill="#343a40" opacity=".9"/><rect x="2.3" y="7.9" width="1.3" height="1" fill="#343a40" opacity=".4"/><rect x="4.7" y="7.9" width="4.3" height="1" fill="#343a40" opacity=".4"/><rect x="2.3" y="10.5" width="1.3" height="1" fill="#343a40" opacity=".8"/><rect x="4.7" y="10.5" width="4.3" height="1" fill="#343a40" opacity=".9"/></svg>
<svg class="b" style="left:218px;top:399.3px;" width="8" height="11" viewBox="0 0 8 11"><path d="M6.2 1.4 L2 5.4 L6.2 9.4" stroke="#c2c7d0" stroke-width="2.5" fill="none" stroke-linecap="round" stroke-linejoin="round"/></svg>
<div class="a" style="left:45px;top:434.81px;font-size:14.1px;letter-spacing:-0.85px;line-height:22px;color:#c2c7d0;-webkit-text-stroke:.3px #c2c7d0;">Exams</div>
<svg class="b" style="left:26.2px;top:438.6px;" width="13.3" height="14.4" viewBox="0 0 13.3 14.4"><path d="M0.6 2.8 L3 2.8 L3 11.8 L9.6 11.8 L9.6 13.8 Q9.6 14.4 9 14.4 L0.6 14.4 Q0 14.4 0 13.8 L0 3.4 Q0 2.8 .6 2.8 Z" fill="#c2c7d0"/><path d="M4.2 0 L10.2 0 L13.3 3.1 L13.3 11 Q13.3 11.4 12.9 11.4 L4.2 11.4 Q3.8 11.4 3.8 11 L3.8 .4 Q3.8 0 4.2 0 Z" fill="#c2c7d0"/><path d="M10.2 0 L10.2 3.1 L13.3 3.1" fill="#343a40" opacity=".6"/></svg>
<svg class="b" style="left:218px;top:440.3px;" width="8" height="11" viewBox="0 0 8 11"><path d="M6.2 1.4 L2 5.4 L6.2 9.4" stroke="#c2c7d0" stroke-width="2.5" fill="none" stroke-linecap="round" stroke-linejoin="round"/></svg>
<div class="a" style="left:45px;top:474.81px;font-size:14.1px;letter-spacing:0.217px;line-height:22px;color:#c2c7d0;-webkit-text-stroke:.3px #c2c7d0;">Notices</div>
<svg class="b" style="left:27px;top:478.6px;" width="11.3" height="14.4" viewBox="0 0 11.3 14.4"><rect x="0" y="1.6" width="11.3" height="12.8" rx="1.2" fill="#c2c7d0"/><circle cx="5.65" cy="1.8" r="1.8" fill="#c2c7d0"/><circle cx="5.65" cy="1.9" r=".6" fill="#343a40"/><rect x="3.2" y="3.6" width="5" height="1" rx=".4" fill="#343a40"/></svg>
<svg class="b" style="left:218px;top:480.3px;" width="8" height="11" viewBox="0 0 8 11"><path d="M6.2 1.4 L2 5.4 L6.2 9.4" stroke="#c2c7d0" stroke-width="2.5" fill="none" stroke-linecap="round" stroke-linejoin="round"/></svg>
<div class="a" style="left:45px;top:515.81px;font-size:14.1px;letter-spacing:-0.15px;line-height:22px;color:#c2c7d0;-webkit-text-stroke:.3px #c2c7d0;">Files</div>
<svg class="b" style="left:26.2px;top:519.6px;" width="13.6" height="14.4" viewBox="0 0 13.6 14.4"><path d="M11.9 6.7 L5.85 12.75 A2.9 2.9 0 0 1 1.75 8.65 L8.47 1.93 A1.5 1.5 0 0 1 10.59 4.05 L5.4 9.24" stroke="#c2c7d0" stroke-width="1.6" fill="none" stroke-linecap="round"/></svg>
<svg class="b" style="left:218px;top:521.3px;" width="8" height="11" viewBox="0 0 8 11"><path d="M6.2 1.4 L2 5.4 L6.2 9.4" stroke="#c2c7d0" stroke-width="2.5" fill="none" stroke-linecap="round" stroke-linejoin="round"/></svg>
<div class="a" style="left:20px;top:556.91px;font-size:14.1px;letter-spacing:-1.425px;line-height:22px;color:#d0d4db;-webkit-text-stroke:.3px #d0d4db;">USERS</div>
<div class="a" style="left:45px;top:594.81px;font-size:14.1px;letter-spacing:0.037px;line-height:22px;color:#c2c7d0;-webkit-text-stroke:.3px #c2c7d0;">Students</div>
<svg class="b" style="left:26.1px;top:598.4px;" width="13.6" height="14.6" viewBox="0 0 13.6 14.6"><path d="M6.8 0 L13.6 2.1 L6.8 4 L0 2.1 Z" fill="#c2c7d0"/><rect x="1.1" y="2.3" width="1.3" height="5.2" fill="#c2c7d0"/><path d="M3.5 3 L10.1 3 L10.1 6 A3.3 3.3 0 0 1 3.5 6 Z" fill="#c2c7d0"/><path d="M0 14.6 L0 12.6 Q0 9.3 3.6 9 L6.8 11.4 L10 9 Q13.6 9.3 13.6 12.6 L13.6 14.6 Z" fill="#c2c7d0"/></svg>
<div class="a" style="left:45px;top:634.81px;font-size:14.1px;letter-spacing:0.15px;line-height:22px;color:#c2c7d0;-webkit-text-stroke:.3px #c2c7d0;">Other Users</div>
<svg class="b" style="left:23.5px;top:639px;" width="18.5" height="13" viewBox="0 0 18.5 13"><circle cx="9.15" cy="3.4" r="3.3" fill="#c2c7d0"/><circle cx="2.9" cy="4.1" r="1.9" fill="#c2c7d0"/><circle cx="15.6" cy="4.1" r="1.9" fill="#c2c7d0"/><path d="M3.6 13 L3.6 11 Q3.6 7.6 6.6 7.6 L11.7 7.6 Q14.7 7.6 14.7 11 L14.7 13 Z" fill="#c2c7d0"/><path d="M0 10.6 L0 8.8 Q0 6.9 1.9 6.9 L4.6 6.9 Q3 8.2 2.8 10.6 Z" fill="#c2c7d0"/><path d="M18.5 10.6 L18.5 8.8 Q18.5 6.9 16.6 6.9 L13.9 6.9 Q15.5 8.2 15.7 10.6 Z" fill="#c2c7d0"/></svg>
<svg class="b" style="left:218px;top:640.3px;" width="8" height="11" viewBox="0 0 8 11"><path d="M6.2 1.4 L2 5.4 L6.2 9.4" stroke="#c2c7d0" stroke-width="2.5" fill="none" stroke-linecap="round" stroke-linejoin="round"/></svg>
<div class="a" style="left:24px;top:675.81px;font-size:14.1px;letter-spacing:-0.018px;line-height:22px;color:#c2c7d0;-webkit-text-stroke:.3px #c2c7d0;">Permission Groups</div>
<svg class="b" style="left:218px;top:681.3px;" width="8" height="11" viewBox="0 0 8 11"><path d="M6.2 1.4 L2 5.4 L6.2 9.4" stroke="#c2c7d0" stroke-width="2.5" fill="none" stroke-linecap="round" stroke-linejoin="round"/></svg>
<div class="a" style="left:20px;top:716.91px;font-size:14.1px;letter-spacing:-0.193px;line-height:22px;color:#d0d4db;-webkit-text-stroke:.3px #d0d4db;">ACCOUNTS</div>
<div class="a" style="left:45px;top:754.81px;font-size:14.1px;letter-spacing:0.017px;line-height:22px;color:#c2c7d0;-webkit-text-stroke:.3px #c2c7d0;">Reports</div>
<svg class="b" style="left:27px;top:758.6px;" width="11.3" height="14.4" viewBox="0 0 11.3 14.4"><path d="M0.8 0 L7.7 0 L11.3 3.6 L11.3 13.6 Q11.3 14.4 10.5 14.4 L0.8 14.4 Q0 14.4 0 13.6 L0 .8 Q0 0 .8 0 Z" fill="#c2c7d0"/><path d="M7.7 0 L7.7 3.6 L11.3 3.6 Z" fill="#343a40" opacity=".5"/><rect x="2.2" y="2.6" width="2.4" height=".9" fill="#343a40" opacity=".8"/><rect x="2.2" y="6.6" width="7" height="3" rx=".4" fill="none" stroke="#343a40" stroke-width="1" opacity=".8"/><rect x="6.6" y="11.9" width="2.4" height=".9" fill="#343a40" opacity=".9"/></svg>
<svg class="b" style="left:218px;top:760.3px;" width="8" height="11" viewBox="0 0 8 11"><path d="M6.2 1.4 L2 5.4 L6.2 9.4" stroke="#c2c7d0" stroke-width="2.5" fill="none" stroke-linecap="round" stroke-linejoin="round"/></svg>
<div class="a" style="left:45px;top:794.81px;font-size:14.1px;letter-spacing:-0.35px;line-height:22px;color:#c2c7d0;-webkit-text-stroke:.3px #c2c7d0;">Heads</div>
<svg class="b" style="left:23.7px;top:798.6px;" width="18.3" height="14.4" viewBox="0 0 18.3 14.4"><rect x="6.2" y="0" width="5.8" height="4.4" rx=".6" fill="#c2c7d0"/><rect x="8.4" y="4" width="1.4" height="5.6" fill="#c2c7d0"/><path d="M2 9.6 L2 7.6 Q2 6.4 3.2 6.4 L15 6.4 Q16.2 6.4 16.2 7.6 L16.2 9.6" stroke="#c2c7d0" stroke-width="1.4" fill="none"/><rect x="0" y="9.5" width="5" height="4.9" rx=".7" fill="#c2c7d0"/><rect x="6.6" y="9.5" width="5" height="4.9" rx=".7" fill="#c2c7d0"/><rect x="13.2" y="9.5" width="5" height="4.9" rx=".7" fill="#c2c7d0"/></svg>
<svg class="b" style="left:218px;top:800.3px;" width="8" height="11" viewBox="0 0 8 11"><path d="M6.2 1.4 L2 5.4 L6.2 9.4" stroke="#c2c7d0" stroke-width="2.5" fill="none" stroke-linecap="round" stroke-linejoin="round"/></svg>
</div>
</body></html>
